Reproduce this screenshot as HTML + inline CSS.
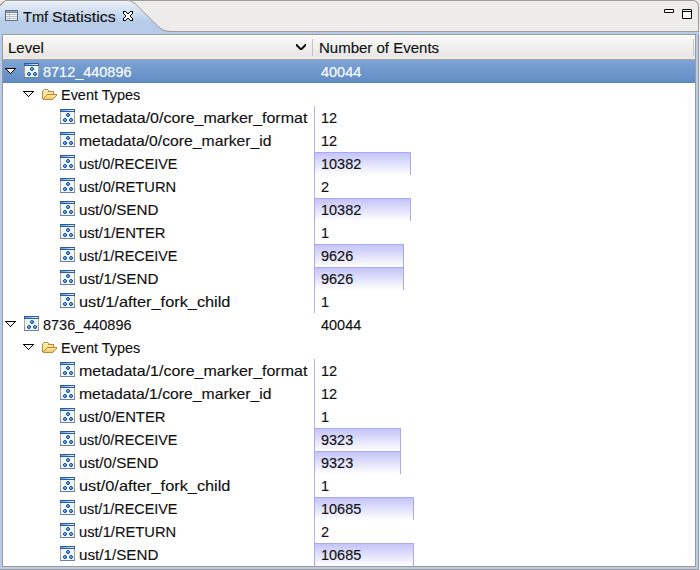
<!DOCTYPE html>
<html><head><meta charset="utf-8">
<style>
*{margin:0;padding:0;box-sizing:border-box}
html,body{width:700px;height:570px;overflow:hidden;background:#eeedeb}
body{position:relative;font-family:"Liberation Sans",sans-serif;font-size:15px;color:#111}
.abs{position:absolute}
.txt{position:absolute;white-space:nowrap;line-height:17px;height:17px;transform-origin:0 0;-webkit-text-stroke:0.15px currentColor}
.row{position:absolute;left:3px;width:692px;height:23px}
.sel{background:linear-gradient(#7ba5da 0px,#7da3d4 1px,#618cc4 22px);border-bottom:1px solid #5685c2}
.bar{position:absolute;height:23px;border:1px solid #a9a9f6;border-bottom:none;background:linear-gradient(#c4c4f8,#ffffff)}
.vl{position:absolute;width:1px;height:23px;background:#b4b4f8}
</style></head><body>

<div class="abs" style="left:0;top:20px;width:699px;height:550px;background:#b6cce9;border-right:1px solid #9f9a95;border-bottom:1px solid #9f9a95"></div>
<div class="abs" style="left:0;top:0;width:699px;height:32px;background:#edecea;border-top-right-radius:6px;border-top:1px solid #9f9a95;border-right:1px solid #9f9a95"></div><div class="abs" style="left:0;top:0;width:6px;height:6px;background:#efeeec"></div>
<svg class="abs" style="left:0;top:0" width="700" height="35">
  <defs>
    <linearGradient id="tg" x1="0" y1="0" x2="0" y2="1">
      <stop offset="0" stop-color="#f4f7fb"/>
      <stop offset="0.06" stop-color="#e9eff8"/>
      <stop offset="0.65" stop-color="#b7cce9"/>
      <stop offset="1" stop-color="#b5cbe8"/>
    </linearGradient>
  </defs>
  <path d="M0,34 L0,5 L5,0 L127,0 C131,0 134.5,2.5 138,6 L157.5,25.5 C161,29 165,31 171,31 L699,31 L699,34 Z" fill="url(#tg)"/>
  <path d="M5.5,0.5 L127,0.5 C131,0.5 134.5,3 138,6.5 L157.5,26 C161,29.5 165,31.5 171,31.5 L699,31.5" fill="none" stroke="#9f9a95" stroke-width="1"/>
  <rect x="0" y="32" width="698" height="2" fill="#b6cce9"/>
</svg>
<div class="abs" style="left:2px;top:34px;width:694px;height:533px;background:#fff;border:1px solid #9f9a95"></div>
<div class="abs" style="left:3px;top:35px;width:692px;height:25px;background:linear-gradient(#ffffff 0px,#f9f9f8 2px,#e7e6e4 22px,#eeedec 24px);border-bottom:1px solid #a8a39e"></div>
<div class="txt" style="left:8px;top:39px">Level</div>
<div class="txt" style="left:319px;top:39px">Number of Events</div>
<div class="abs" style="left:312px;top:39px;width:1px;height:17px;background:#c9c6c2"></div>
<div class="abs" style="left:693px;top:39px;width:1px;height:17px;background:#c9c6c2"></div>
<div class="txt" style="left:23px;top:8px;transform:scaleX(0.97)">Tmf</div><div class="txt" style="left:52px;top:8px;transform:scaleX(1.06)">Statistics</div>
<svg class="abs" style="left:0px;top:0px" width="6" height="6" shape-rendering="crispEdges"><rect x="5" y="0" width="1" height="1" fill="#a29d98"/><rect x="3" y="1" width="2" height="1" fill="#a29d98"/><rect x="5" y="1" width="1" height="1" fill="#f4f7fb"/><rect x="2" y="2" width="2" height="1" fill="#a29d98"/><rect x="4" y="2" width="1" height="1" fill="#f4f7fb"/><rect x="1" y="3" width="2" height="1" fill="#a29d98"/><rect x="3" y="3" width="1" height="1" fill="#f4f7fb"/><rect x="0" y="4" width="2" height="1" fill="#a29d98"/><rect x="2" y="4" width="1" height="1" fill="#f4f7fb"/><rect x="0" y="5" width="1" height="1" fill="#a29d98"/><rect x="1" y="5" width="1" height="1" fill="#f4f7fb"/></svg>
<svg class="abs" style="left:5px;top:10px" width="13" height="11" shape-rendering="crispEdges"><rect x="0" y="0" width="13" height="1" fill="#5d6d8b"/><rect x="0" y="1" width="1" height="1" fill="#5d6d8b"/><rect x="1" y="1" width="11" height="1" fill="#9ca8bd"/><rect x="12" y="1" width="1" height="1" fill="#5d6d8b"/><rect x="0" y="2" width="1" height="1" fill="#5d6d8b"/><rect x="1" y="2" width="11" height="1" fill="#75849f"/><rect x="12" y="2" width="1" height="1" fill="#5d6d8b"/><rect x="0" y="3" width="1" height="1" fill="#5d6d8b"/><rect x="1" y="3" width="3" height="1" fill="#ffffff"/><rect x="4" y="3" width="1" height="1" fill="#b4bccb"/><rect x="5" y="3" width="7" height="1" fill="#ffffff"/><rect x="12" y="3" width="1" height="1" fill="#5d6d8b"/><rect x="0" y="4" width="1" height="1" fill="#5d6d8b"/><rect x="1" y="4" width="11" height="1" fill="#b4bccb"/><rect x="12" y="4" width="1" height="1" fill="#5d6d8b"/><rect x="0" y="5" width="1" height="1" fill="#5d6d8b"/><rect x="1" y="5" width="3" height="1" fill="#ffffff"/><rect x="4" y="5" width="1" height="1" fill="#b4bccb"/><rect x="5" y="5" width="7" height="1" fill="#ffffff"/><rect x="12" y="5" width="1" height="1" fill="#5d6d8b"/><rect x="0" y="6" width="1" height="1" fill="#5d6d8b"/><rect x="1" y="6" width="11" height="1" fill="#b4bccb"/><rect x="12" y="6" width="1" height="1" fill="#5d6d8b"/><rect x="0" y="7" width="1" height="1" fill="#5d6d8b"/><rect x="1" y="7" width="3" height="1" fill="#ffffff"/><rect x="4" y="7" width="1" height="1" fill="#b4bccb"/><rect x="5" y="7" width="7" height="1" fill="#ffffff"/><rect x="12" y="7" width="1" height="1" fill="#5d6d8b"/><rect x="0" y="8" width="1" height="1" fill="#5d6d8b"/><rect x="1" y="8" width="11" height="1" fill="#b4bccb"/><rect x="12" y="8" width="1" height="1" fill="#5d6d8b"/><rect x="0" y="9" width="1" height="1" fill="#5d6d8b"/><rect x="1" y="9" width="3" height="1" fill="#ffffff"/><rect x="4" y="9" width="1" height="1" fill="#b4bccb"/><rect x="5" y="9" width="7" height="1" fill="#ffffff"/><rect x="12" y="9" width="1" height="1" fill="#5d6d8b"/><rect x="0" y="10" width="13" height="1" fill="#5d6d8b"/></svg>
<svg class="abs" style="left:123px;top:11px" width="10" height="10" shape-rendering="crispEdges"><rect x="0" y="0" width="3" height="1" fill="#000000"/><rect x="7" y="0" width="3" height="1" fill="#000000"/><rect x="0" y="1" width="1" height="1" fill="#000000"/><rect x="1" y="1" width="2" height="1" fill="#ffffff"/><rect x="3" y="1" width="1" height="1" fill="#000000"/><rect x="6" y="1" width="1" height="1" fill="#000000"/><rect x="7" y="1" width="2" height="1" fill="#ffffff"/><rect x="9" y="1" width="1" height="1" fill="#000000"/><rect x="0" y="2" width="1" height="1" fill="#000000"/><rect x="1" y="2" width="3" height="1" fill="#ffffff"/><rect x="4" y="2" width="2" height="1" fill="#000000"/><rect x="6" y="2" width="3" height="1" fill="#ffffff"/><rect x="9" y="2" width="1" height="1" fill="#000000"/><rect x="1" y="3" width="1" height="1" fill="#000000"/><rect x="2" y="3" width="6" height="1" fill="#ffffff"/><rect x="8" y="3" width="1" height="1" fill="#000000"/><rect x="2" y="4" width="1" height="1" fill="#000000"/><rect x="3" y="4" width="4" height="1" fill="#ffffff"/><rect x="7" y="4" width="1" height="1" fill="#000000"/><rect x="2" y="5" width="1" height="1" fill="#000000"/><rect x="3" y="5" width="4" height="1" fill="#ffffff"/><rect x="7" y="5" width="1" height="1" fill="#000000"/><rect x="1" y="6" width="1" height="1" fill="#000000"/><rect x="2" y="6" width="6" height="1" fill="#ffffff"/><rect x="8" y="6" width="1" height="1" fill="#000000"/><rect x="0" y="7" width="1" height="1" fill="#000000"/><rect x="1" y="7" width="3" height="1" fill="#ffffff"/><rect x="4" y="7" width="2" height="1" fill="#000000"/><rect x="6" y="7" width="3" height="1" fill="#ffffff"/><rect x="9" y="7" width="1" height="1" fill="#000000"/><rect x="0" y="8" width="1" height="1" fill="#000000"/><rect x="1" y="8" width="2" height="1" fill="#ffffff"/><rect x="3" y="8" width="1" height="1" fill="#000000"/><rect x="6" y="8" width="1" height="1" fill="#000000"/><rect x="7" y="8" width="2" height="1" fill="#ffffff"/><rect x="9" y="8" width="1" height="1" fill="#000000"/><rect x="0" y="9" width="3" height="1" fill="#000000"/><rect x="7" y="9" width="3" height="1" fill="#000000"/></svg>
<svg class="abs" style="left:664px;top:9px" width="10" height="4" shape-rendering="crispEdges"><rect x="0" y="0" width="1" height="1" fill="#5a5958"/><rect x="1" y="0" width="8" height="1" fill="#000000"/><rect x="9" y="0" width="1" height="1" fill="#5a5958"/><rect x="0" y="1" width="1" height="1" fill="#000000"/><rect x="1" y="1" width="8" height="1" fill="#ffffff"/><rect x="9" y="1" width="1" height="1" fill="#000000"/><rect x="0" y="2" width="1" height="1" fill="#000000"/><rect x="1" y="2" width="8" height="1" fill="#ffffff"/><rect x="9" y="2" width="1" height="1" fill="#000000"/><rect x="0" y="3" width="1" height="1" fill="#5a5958"/><rect x="1" y="3" width="8" height="1" fill="#000000"/><rect x="9" y="3" width="1" height="1" fill="#5a5958"/></svg>
<svg class="abs" style="left:682px;top:9px" width="10" height="10" shape-rendering="crispEdges"><rect x="0" y="0" width="1" height="1" fill="#5a5958"/><rect x="1" y="0" width="8" height="1" fill="#000000"/><rect x="9" y="0" width="1" height="1" fill="#5a5958"/><rect x="0" y="1" width="1" height="1" fill="#000000"/><rect x="1" y="1" width="8" height="1" fill="#ffffff"/><rect x="9" y="1" width="1" height="1" fill="#000000"/><rect x="0" y="2" width="10" height="1" fill="#000000"/><rect x="0" y="3" width="1" height="1" fill="#000000"/><rect x="1" y="3" width="8" height="1" fill="#ffffff"/><rect x="9" y="3" width="1" height="1" fill="#000000"/><rect x="0" y="4" width="1" height="1" fill="#000000"/><rect x="1" y="4" width="8" height="1" fill="#ffffff"/><rect x="9" y="4" width="1" height="1" fill="#000000"/><rect x="0" y="5" width="1" height="1" fill="#000000"/><rect x="1" y="5" width="8" height="1" fill="#ffffff"/><rect x="9" y="5" width="1" height="1" fill="#000000"/><rect x="0" y="6" width="1" height="1" fill="#000000"/><rect x="1" y="6" width="8" height="1" fill="#ffffff"/><rect x="9" y="6" width="1" height="1" fill="#000000"/><rect x="0" y="7" width="1" height="1" fill="#000000"/><rect x="1" y="7" width="8" height="1" fill="#ffffff"/><rect x="9" y="7" width="1" height="1" fill="#000000"/><rect x="0" y="8" width="1" height="1" fill="#000000"/><rect x="1" y="8" width="8" height="1" fill="#ffffff"/><rect x="9" y="8" width="1" height="1" fill="#000000"/><rect x="0" y="9" width="1" height="1" fill="#5a5958"/><rect x="1" y="9" width="8" height="1" fill="#000000"/><rect x="9" y="9" width="1" height="1" fill="#5a5958"/></svg>
<svg class="abs" style="left:296px;top:44px" width="10" height="6" shape-rendering="crispEdges"><rect x="0" y="0" width="1" height="1" fill="#111111"/><rect x="1" y="0" width="1" height="1" fill="#8a8988"/><rect x="8" y="0" width="1" height="1" fill="#8a8988"/><rect x="9" y="0" width="1" height="1" fill="#111111"/><rect x="0" y="1" width="2" height="1" fill="#111111"/><rect x="2" y="1" width="1" height="1" fill="#8a8988"/><rect x="7" y="1" width="1" height="1" fill="#8a8988"/><rect x="8" y="1" width="2" height="1" fill="#111111"/><rect x="0" y="2" width="1" height="1" fill="#8a8988"/><rect x="1" y="2" width="2" height="1" fill="#111111"/><rect x="3" y="2" width="1" height="1" fill="#8a8988"/><rect x="6" y="2" width="1" height="1" fill="#8a8988"/><rect x="7" y="2" width="2" height="1" fill="#111111"/><rect x="9" y="2" width="1" height="1" fill="#8a8988"/><rect x="1" y="3" width="1" height="1" fill="#8a8988"/><rect x="2" y="3" width="2" height="1" fill="#111111"/><rect x="4" y="3" width="2" height="1" fill="#8a8988"/><rect x="6" y="3" width="2" height="1" fill="#111111"/><rect x="8" y="3" width="1" height="1" fill="#8a8988"/><rect x="2" y="4" width="1" height="1" fill="#8a8988"/><rect x="3" y="4" width="4" height="1" fill="#111111"/><rect x="7" y="4" width="1" height="1" fill="#8a8988"/><rect x="3" y="5" width="1" height="1" fill="#8a8988"/><rect x="4" y="5" width="2" height="1" fill="#111111"/><rect x="6" y="5" width="1" height="1" fill="#8a8988"/></svg>
<div class="row sel" style="top:60px"></div>
<svg class="abs" style="left:5px;top:68px" width="11" height="6" shape-rendering="crispEdges"><rect x="0" y="0" width="11" height="1" fill="#000000"/><rect x="1" y="1" width="1" height="1" fill="#000000"/><rect x="2" y="1" width="7" height="1" fill="#ffffff"/><rect x="9" y="1" width="1" height="1" fill="#000000"/><rect x="2" y="2" width="1" height="1" fill="#000000"/><rect x="3" y="2" width="5" height="1" fill="#ffffff"/><rect x="8" y="2" width="1" height="1" fill="#000000"/><rect x="3" y="3" width="1" height="1" fill="#000000"/><rect x="4" y="3" width="3" height="1" fill="#ffffff"/><rect x="7" y="3" width="1" height="1" fill="#000000"/><rect x="4" y="4" width="1" height="1" fill="#000000"/><rect x="5" y="4" width="1" height="1" fill="#ffffff"/><rect x="6" y="4" width="1" height="1" fill="#000000"/><rect x="5" y="5" width="1" height="1" fill="#000000"/></svg>
<svg class="abs" style="left:24px;top:63px" width="15" height="15" shape-rendering="crispEdges"><rect x="0" y="0" width="15" height="1" fill="#2e5c9a"/><rect x="0" y="1" width="1" height="1" fill="#2e5c9a"/><rect x="1" y="1" width="4" height="1" fill="#63a6e4"/><rect x="5" y="1" width="3" height="1" fill="#8cc0ee"/><rect x="8" y="1" width="3" height="1" fill="#b9daf5"/><rect x="11" y="1" width="3" height="1" fill="#e4f1fb"/><rect x="14" y="1" width="1" height="1" fill="#2e5c9a"/><rect x="0" y="2" width="15" height="1" fill="#2e5c9a"/><rect x="0" y="3" width="1" height="1" fill="#b8a978"/><rect x="1" y="3" width="13" height="1" fill="#eef6fd"/><rect x="14" y="3" width="1" height="1" fill="#b8a978"/><rect x="0" y="4" width="1" height="1" fill="#b8a978"/><rect x="1" y="4" width="13" height="1" fill="#eef6fd"/><rect x="14" y="4" width="1" height="1" fill="#b8a978"/><rect x="0" y="5" width="1" height="1" fill="#b8a978"/><rect x="1" y="5" width="13" height="1" fill="#eef6fd"/><rect x="14" y="5" width="1" height="1" fill="#b8a978"/><rect x="0" y="6" width="1" height="1" fill="#b8a978"/><rect x="1" y="6" width="13" height="1" fill="#eef6fd"/><rect x="14" y="6" width="1" height="1" fill="#b8a978"/><rect x="0" y="7" width="1" height="1" fill="#b8a978"/><rect x="1" y="7" width="13" height="1" fill="#eef6fd"/><rect x="14" y="7" width="1" height="1" fill="#b8a978"/><rect x="0" y="8" width="1" height="1" fill="#a3a089"/><rect x="1" y="8" width="13" height="1" fill="#eef6fd"/><rect x="14" y="8" width="1" height="1" fill="#a3a089"/><rect x="0" y="9" width="1" height="1" fill="#a3a089"/><rect x="1" y="9" width="13" height="1" fill="#eef6fd"/><rect x="14" y="9" width="1" height="1" fill="#a3a089"/><rect x="0" y="10" width="1" height="1" fill="#a3a089"/><rect x="1" y="10" width="13" height="1" fill="#eef6fd"/><rect x="14" y="10" width="1" height="1" fill="#a3a089"/><rect x="0" y="11" width="1" height="1" fill="#8790a4"/><rect x="1" y="11" width="13" height="1" fill="#eef6fd"/><rect x="14" y="11" width="1" height="1" fill="#8790a4"/><rect x="0" y="12" width="1" height="1" fill="#8790a4"/><rect x="1" y="12" width="13" height="1" fill="#eef6fd"/><rect x="14" y="12" width="1" height="1" fill="#8790a4"/><rect x="0" y="13" width="1" height="1" fill="#8790a4"/><rect x="1" y="13" width="13" height="1" fill="#eef6fd"/><rect x="14" y="13" width="1" height="1" fill="#8790a4"/><rect x="0" y="14" width="15" height="1" fill="#6e81a1"/><g shape-rendering="auto"><circle cx="8" cy="6" r="1.5" fill="#5d9ee0" stroke="#0f3f8a" stroke-width="1"/><circle cx="7.7" cy="5.8" r="0.6" fill="#b8def9"/><circle cx="5" cy="11" r="1.5" fill="#5d9ee0" stroke="#0f3f8a" stroke-width="1"/><circle cx="4.7" cy="10.8" r="0.6" fill="#b8def9"/><circle cx="11" cy="11" r="1.5" fill="#5d9ee0" stroke="#0f3f8a" stroke-width="1"/><circle cx="10.7" cy="10.8" r="0.6" fill="#b8def9"/></g></svg>
<div class="txt" style="left:43px;top:63px;color:#ffffff;transform:scaleX(0.9640)">8712_440896</div>
<div class="txt" style="left:320.5px;top:63px;color:#ffffff;transform:scaleX(0.9650)">40044</div>
<div class="row" style="top:83px"></div>
<svg class="abs" style="left:23px;top:91px" width="11" height="6" shape-rendering="crispEdges"><rect x="0" y="0" width="11" height="1" fill="#000000"/><rect x="1" y="1" width="1" height="1" fill="#000000"/><rect x="2" y="1" width="7" height="1" fill="#ffffff"/><rect x="9" y="1" width="1" height="1" fill="#000000"/><rect x="2" y="2" width="1" height="1" fill="#000000"/><rect x="3" y="2" width="5" height="1" fill="#ffffff"/><rect x="8" y="2" width="1" height="1" fill="#000000"/><rect x="3" y="3" width="1" height="1" fill="#000000"/><rect x="4" y="3" width="3" height="1" fill="#ffffff"/><rect x="7" y="3" width="1" height="1" fill="#000000"/><rect x="4" y="4" width="1" height="1" fill="#000000"/><rect x="5" y="4" width="1" height="1" fill="#ffffff"/><rect x="6" y="4" width="1" height="1" fill="#000000"/><rect x="5" y="5" width="1" height="1" fill="#000000"/></svg>
<svg class="abs" style="left:42px;top:89px" width="15" height="11" shape-rendering="crispEdges"><rect x="2" y="0" width="4" height="1" fill="#c8852c"/><rect x="1" y="1" width="1" height="1" fill="#c8852c"/><rect x="2" y="1" width="4" height="1" fill="#fffbea"/><rect x="6" y="1" width="1" height="1" fill="#c8852c"/><rect x="0" y="2" width="1" height="1" fill="#c8852c"/><rect x="1" y="2" width="5" height="1" fill="#fae6a4"/><rect x="6" y="2" width="6" height="1" fill="#c8852c"/><rect x="0" y="3" width="1" height="1" fill="#c8852c"/><rect x="1" y="3" width="10" height="1" fill="#fae6a4"/><rect x="11" y="3" width="1" height="1" fill="#c8852c"/><rect x="0" y="4" width="1" height="1" fill="#c8852c"/><rect x="1" y="4" width="10" height="1" fill="#fae6a4"/><rect x="11" y="4" width="1" height="1" fill="#c8852c"/><rect x="0" y="5" width="1" height="1" fill="#c8852c"/><rect x="1" y="5" width="4" height="1" fill="#fae6a4"/><rect x="5" y="5" width="10" height="1" fill="#c8852c"/><rect x="0" y="6" width="1" height="1" fill="#c8852c"/><rect x="1" y="6" width="3" height="1" fill="#fae6a4"/><rect x="4" y="6" width="1" height="1" fill="#c8852c"/><rect x="5" y="6" width="9" height="1" fill="#fbe3a0"/><rect x="14" y="6" width="1" height="1" fill="#c8852c"/><rect x="0" y="7" width="1" height="1" fill="#c8852c"/><rect x="1" y="7" width="2" height="1" fill="#fae6a4"/><rect x="3" y="7" width="1" height="1" fill="#c8852c"/><rect x="4" y="7" width="9" height="1" fill="#fbe3a0"/><rect x="13" y="7" width="1" height="1" fill="#c8852c"/><rect x="0" y="8" width="1" height="1" fill="#c8852c"/><rect x="1" y="8" width="1" height="1" fill="#fae6a4"/><rect x="2" y="8" width="1" height="1" fill="#c8852c"/><rect x="3" y="8" width="9" height="1" fill="#f3cd78"/><rect x="12" y="8" width="1" height="1" fill="#c8852c"/><rect x="0" y="9" width="2" height="1" fill="#c8852c"/><rect x="2" y="9" width="9" height="1" fill="#f3cd78"/><rect x="11" y="9" width="1" height="1" fill="#c8852c"/><rect x="1" y="10" width="10" height="1" fill="#c8852c"/></svg>
<div class="txt" style="left:61px;top:86px;transform:scaleX(0.9630)">Event Types</div>
<div class="row" style="top:106px"></div>
<div class="vl" style="left:314px;top:106px"></div>
<svg class="abs" style="left:60px;top:109px" width="15" height="15" shape-rendering="crispEdges"><rect x="0" y="0" width="15" height="1" fill="#2e5c9a"/><rect x="0" y="1" width="1" height="1" fill="#2e5c9a"/><rect x="1" y="1" width="4" height="1" fill="#63a6e4"/><rect x="5" y="1" width="3" height="1" fill="#8cc0ee"/><rect x="8" y="1" width="3" height="1" fill="#b9daf5"/><rect x="11" y="1" width="3" height="1" fill="#e4f1fb"/><rect x="14" y="1" width="1" height="1" fill="#2e5c9a"/><rect x="0" y="2" width="15" height="1" fill="#2e5c9a"/><rect x="0" y="3" width="1" height="1" fill="#b8a978"/><rect x="1" y="3" width="13" height="1" fill="#eef6fd"/><rect x="14" y="3" width="1" height="1" fill="#b8a978"/><rect x="0" y="4" width="1" height="1" fill="#b8a978"/><rect x="1" y="4" width="13" height="1" fill="#eef6fd"/><rect x="14" y="4" width="1" height="1" fill="#b8a978"/><rect x="0" y="5" width="1" height="1" fill="#b8a978"/><rect x="1" y="5" width="13" height="1" fill="#eef6fd"/><rect x="14" y="5" width="1" height="1" fill="#b8a978"/><rect x="0" y="6" width="1" height="1" fill="#b8a978"/><rect x="1" y="6" width="13" height="1" fill="#eef6fd"/><rect x="14" y="6" width="1" height="1" fill="#b8a978"/><rect x="0" y="7" width="1" height="1" fill="#b8a978"/><rect x="1" y="7" width="13" height="1" fill="#eef6fd"/><rect x="14" y="7" width="1" height="1" fill="#b8a978"/><rect x="0" y="8" width="1" height="1" fill="#a3a089"/><rect x="1" y="8" width="13" height="1" fill="#eef6fd"/><rect x="14" y="8" width="1" height="1" fill="#a3a089"/><rect x="0" y="9" width="1" height="1" fill="#a3a089"/><rect x="1" y="9" width="13" height="1" fill="#eef6fd"/><rect x="14" y="9" width="1" height="1" fill="#a3a089"/><rect x="0" y="10" width="1" height="1" fill="#a3a089"/><rect x="1" y="10" width="13" height="1" fill="#eef6fd"/><rect x="14" y="10" width="1" height="1" fill="#a3a089"/><rect x="0" y="11" width="1" height="1" fill="#8790a4"/><rect x="1" y="11" width="13" height="1" fill="#eef6fd"/><rect x="14" y="11" width="1" height="1" fill="#8790a4"/><rect x="0" y="12" width="1" height="1" fill="#8790a4"/><rect x="1" y="12" width="13" height="1" fill="#eef6fd"/><rect x="14" y="12" width="1" height="1" fill="#8790a4"/><rect x="0" y="13" width="1" height="1" fill="#8790a4"/><rect x="1" y="13" width="13" height="1" fill="#eef6fd"/><rect x="14" y="13" width="1" height="1" fill="#8790a4"/><rect x="0" y="14" width="15" height="1" fill="#6e81a1"/><g shape-rendering="auto"><circle cx="8" cy="6" r="1.5" fill="#5d9ee0" stroke="#0f3f8a" stroke-width="1"/><circle cx="7.7" cy="5.8" r="0.6" fill="#b8def9"/><circle cx="5" cy="11" r="1.5" fill="#5d9ee0" stroke="#0f3f8a" stroke-width="1"/><circle cx="4.7" cy="10.8" r="0.6" fill="#b8def9"/><circle cx="11" cy="11" r="1.5" fill="#5d9ee0" stroke="#0f3f8a" stroke-width="1"/><circle cx="10.7" cy="10.8" r="0.6" fill="#b8def9"/></g></svg>
<div class="txt" style="left:79px;top:109px;transform:scaleX(1.0657)">metadata/0/core_marker_format</div>
<div class="txt" style="left:320.5px;top:109px;transform:scaleX(0.9650)">12</div>
<div class="row" style="top:129px"></div>
<div class="vl" style="left:314px;top:129px"></div>
<svg class="abs" style="left:60px;top:132px" width="15" height="15" shape-rendering="crispEdges"><rect x="0" y="0" width="15" height="1" fill="#2e5c9a"/><rect x="0" y="1" width="1" height="1" fill="#2e5c9a"/><rect x="1" y="1" width="4" height="1" fill="#63a6e4"/><rect x="5" y="1" width="3" height="1" fill="#8cc0ee"/><rect x="8" y="1" width="3" height="1" fill="#b9daf5"/><rect x="11" y="1" width="3" height="1" fill="#e4f1fb"/><rect x="14" y="1" width="1" height="1" fill="#2e5c9a"/><rect x="0" y="2" width="15" height="1" fill="#2e5c9a"/><rect x="0" y="3" width="1" height="1" fill="#b8a978"/><rect x="1" y="3" width="13" height="1" fill="#eef6fd"/><rect x="14" y="3" width="1" height="1" fill="#b8a978"/><rect x="0" y="4" width="1" height="1" fill="#b8a978"/><rect x="1" y="4" width="13" height="1" fill="#eef6fd"/><rect x="14" y="4" width="1" height="1" fill="#b8a978"/><rect x="0" y="5" width="1" height="1" fill="#b8a978"/><rect x="1" y="5" width="13" height="1" fill="#eef6fd"/><rect x="14" y="5" width="1" height="1" fill="#b8a978"/><rect x="0" y="6" width="1" height="1" fill="#b8a978"/><rect x="1" y="6" width="13" height="1" fill="#eef6fd"/><rect x="14" y="6" width="1" height="1" fill="#b8a978"/><rect x="0" y="7" width="1" height="1" fill="#b8a978"/><rect x="1" y="7" width="13" height="1" fill="#eef6fd"/><rect x="14" y="7" width="1" height="1" fill="#b8a978"/><rect x="0" y="8" width="1" height="1" fill="#a3a089"/><rect x="1" y="8" width="13" height="1" fill="#eef6fd"/><rect x="14" y="8" width="1" height="1" fill="#a3a089"/><rect x="0" y="9" width="1" height="1" fill="#a3a089"/><rect x="1" y="9" width="13" height="1" fill="#eef6fd"/><rect x="14" y="9" width="1" height="1" fill="#a3a089"/><rect x="0" y="10" width="1" height="1" fill="#a3a089"/><rect x="1" y="10" width="13" height="1" fill="#eef6fd"/><rect x="14" y="10" width="1" height="1" fill="#a3a089"/><rect x="0" y="11" width="1" height="1" fill="#8790a4"/><rect x="1" y="11" width="13" height="1" fill="#eef6fd"/><rect x="14" y="11" width="1" height="1" fill="#8790a4"/><rect x="0" y="12" width="1" height="1" fill="#8790a4"/><rect x="1" y="12" width="13" height="1" fill="#eef6fd"/><rect x="14" y="12" width="1" height="1" fill="#8790a4"/><rect x="0" y="13" width="1" height="1" fill="#8790a4"/><rect x="1" y="13" width="13" height="1" fill="#eef6fd"/><rect x="14" y="13" width="1" height="1" fill="#8790a4"/><rect x="0" y="14" width="15" height="1" fill="#6e81a1"/><g shape-rendering="auto"><circle cx="8" cy="6" r="1.5" fill="#5d9ee0" stroke="#0f3f8a" stroke-width="1"/><circle cx="7.7" cy="5.8" r="0.6" fill="#b8def9"/><circle cx="5" cy="11" r="1.5" fill="#5d9ee0" stroke="#0f3f8a" stroke-width="1"/><circle cx="4.7" cy="10.8" r="0.6" fill="#b8def9"/><circle cx="11" cy="11" r="1.5" fill="#5d9ee0" stroke="#0f3f8a" stroke-width="1"/><circle cx="10.7" cy="10.8" r="0.6" fill="#b8def9"/></g></svg>
<div class="txt" style="left:79px;top:132px;transform:scaleX(1.0500)">metadata/0/core_marker_id</div>
<div class="txt" style="left:320.5px;top:132px;transform:scaleX(0.9650)">12</div>
<div class="row" style="top:152px"></div>
<div class="bar" style="left:314px;top:152px;width:97px"></div>
<svg class="abs" style="left:60px;top:155px" width="15" height="15" shape-rendering="crispEdges"><rect x="0" y="0" width="15" height="1" fill="#2e5c9a"/><rect x="0" y="1" width="1" height="1" fill="#2e5c9a"/><rect x="1" y="1" width="4" height="1" fill="#63a6e4"/><rect x="5" y="1" width="3" height="1" fill="#8cc0ee"/><rect x="8" y="1" width="3" height="1" fill="#b9daf5"/><rect x="11" y="1" width="3" height="1" fill="#e4f1fb"/><rect x="14" y="1" width="1" height="1" fill="#2e5c9a"/><rect x="0" y="2" width="15" height="1" fill="#2e5c9a"/><rect x="0" y="3" width="1" height="1" fill="#b8a978"/><rect x="1" y="3" width="13" height="1" fill="#eef6fd"/><rect x="14" y="3" width="1" height="1" fill="#b8a978"/><rect x="0" y="4" width="1" height="1" fill="#b8a978"/><rect x="1" y="4" width="13" height="1" fill="#eef6fd"/><rect x="14" y="4" width="1" height="1" fill="#b8a978"/><rect x="0" y="5" width="1" height="1" fill="#b8a978"/><rect x="1" y="5" width="13" height="1" fill="#eef6fd"/><rect x="14" y="5" width="1" height="1" fill="#b8a978"/><rect x="0" y="6" width="1" height="1" fill="#b8a978"/><rect x="1" y="6" width="13" height="1" fill="#eef6fd"/><rect x="14" y="6" width="1" height="1" fill="#b8a978"/><rect x="0" y="7" width="1" height="1" fill="#b8a978"/><rect x="1" y="7" width="13" height="1" fill="#eef6fd"/><rect x="14" y="7" width="1" height="1" fill="#b8a978"/><rect x="0" y="8" width="1" height="1" fill="#a3a089"/><rect x="1" y="8" width="13" height="1" fill="#eef6fd"/><rect x="14" y="8" width="1" height="1" fill="#a3a089"/><rect x="0" y="9" width="1" height="1" fill="#a3a089"/><rect x="1" y="9" width="13" height="1" fill="#eef6fd"/><rect x="14" y="9" width="1" height="1" fill="#a3a089"/><rect x="0" y="10" width="1" height="1" fill="#a3a089"/><rect x="1" y="10" width="13" height="1" fill="#eef6fd"/><rect x="14" y="10" width="1" height="1" fill="#a3a089"/><rect x="0" y="11" width="1" height="1" fill="#8790a4"/><rect x="1" y="11" width="13" height="1" fill="#eef6fd"/><rect x="14" y="11" width="1" height="1" fill="#8790a4"/><rect x="0" y="12" width="1" height="1" fill="#8790a4"/><rect x="1" y="12" width="13" height="1" fill="#eef6fd"/><rect x="14" y="12" width="1" height="1" fill="#8790a4"/><rect x="0" y="13" width="1" height="1" fill="#8790a4"/><rect x="1" y="13" width="13" height="1" fill="#eef6fd"/><rect x="14" y="13" width="1" height="1" fill="#8790a4"/><rect x="0" y="14" width="15" height="1" fill="#6e81a1"/><g shape-rendering="auto"><circle cx="8" cy="6" r="1.5" fill="#5d9ee0" stroke="#0f3f8a" stroke-width="1"/><circle cx="7.7" cy="5.8" r="0.6" fill="#b8def9"/><circle cx="5" cy="11" r="1.5" fill="#5d9ee0" stroke="#0f3f8a" stroke-width="1"/><circle cx="4.7" cy="10.8" r="0.6" fill="#b8def9"/><circle cx="11" cy="11" r="1.5" fill="#5d9ee0" stroke="#0f3f8a" stroke-width="1"/><circle cx="10.7" cy="10.8" r="0.6" fill="#b8def9"/></g></svg>
<div class="txt" style="left:79px;top:155px;transform:scaleX(0.9604)">ust/0/RECEIVE</div>
<div class="txt" style="left:320.5px;top:155px;transform:scaleX(0.9650)">10382</div>
<div class="row" style="top:175px"></div>
<div class="vl" style="left:314px;top:175px"></div>
<svg class="abs" style="left:60px;top:178px" width="15" height="15" shape-rendering="crispEdges"><rect x="0" y="0" width="15" height="1" fill="#2e5c9a"/><rect x="0" y="1" width="1" height="1" fill="#2e5c9a"/><rect x="1" y="1" width="4" height="1" fill="#63a6e4"/><rect x="5" y="1" width="3" height="1" fill="#8cc0ee"/><rect x="8" y="1" width="3" height="1" fill="#b9daf5"/><rect x="11" y="1" width="3" height="1" fill="#e4f1fb"/><rect x="14" y="1" width="1" height="1" fill="#2e5c9a"/><rect x="0" y="2" width="15" height="1" fill="#2e5c9a"/><rect x="0" y="3" width="1" height="1" fill="#b8a978"/><rect x="1" y="3" width="13" height="1" fill="#eef6fd"/><rect x="14" y="3" width="1" height="1" fill="#b8a978"/><rect x="0" y="4" width="1" height="1" fill="#b8a978"/><rect x="1" y="4" width="13" height="1" fill="#eef6fd"/><rect x="14" y="4" width="1" height="1" fill="#b8a978"/><rect x="0" y="5" width="1" height="1" fill="#b8a978"/><rect x="1" y="5" width="13" height="1" fill="#eef6fd"/><rect x="14" y="5" width="1" height="1" fill="#b8a978"/><rect x="0" y="6" width="1" height="1" fill="#b8a978"/><rect x="1" y="6" width="13" height="1" fill="#eef6fd"/><rect x="14" y="6" width="1" height="1" fill="#b8a978"/><rect x="0" y="7" width="1" height="1" fill="#b8a978"/><rect x="1" y="7" width="13" height="1" fill="#eef6fd"/><rect x="14" y="7" width="1" height="1" fill="#b8a978"/><rect x="0" y="8" width="1" height="1" fill="#a3a089"/><rect x="1" y="8" width="13" height="1" fill="#eef6fd"/><rect x="14" y="8" width="1" height="1" fill="#a3a089"/><rect x="0" y="9" width="1" height="1" fill="#a3a089"/><rect x="1" y="9" width="13" height="1" fill="#eef6fd"/><rect x="14" y="9" width="1" height="1" fill="#a3a089"/><rect x="0" y="10" width="1" height="1" fill="#a3a089"/><rect x="1" y="10" width="13" height="1" fill="#eef6fd"/><rect x="14" y="10" width="1" height="1" fill="#a3a089"/><rect x="0" y="11" width="1" height="1" fill="#8790a4"/><rect x="1" y="11" width="13" height="1" fill="#eef6fd"/><rect x="14" y="11" width="1" height="1" fill="#8790a4"/><rect x="0" y="12" width="1" height="1" fill="#8790a4"/><rect x="1" y="12" width="13" height="1" fill="#eef6fd"/><rect x="14" y="12" width="1" height="1" fill="#8790a4"/><rect x="0" y="13" width="1" height="1" fill="#8790a4"/><rect x="1" y="13" width="13" height="1" fill="#eef6fd"/><rect x="14" y="13" width="1" height="1" fill="#8790a4"/><rect x="0" y="14" width="15" height="1" fill="#6e81a1"/><g shape-rendering="auto"><circle cx="8" cy="6" r="1.5" fill="#5d9ee0" stroke="#0f3f8a" stroke-width="1"/><circle cx="7.7" cy="5.8" r="0.6" fill="#b8def9"/><circle cx="5" cy="11" r="1.5" fill="#5d9ee0" stroke="#0f3f8a" stroke-width="1"/><circle cx="4.7" cy="10.8" r="0.6" fill="#b8def9"/><circle cx="11" cy="11" r="1.5" fill="#5d9ee0" stroke="#0f3f8a" stroke-width="1"/><circle cx="10.7" cy="10.8" r="0.6" fill="#b8def9"/></g></svg>
<div class="txt" style="left:79px;top:178px;transform:scaleX(0.9794)">ust/0/RETURN</div>
<div class="txt" style="left:320.5px;top:178px;transform:scaleX(0.9650)">2</div>
<div class="row" style="top:198px"></div>
<div class="bar" style="left:314px;top:198px;width:97px"></div>
<svg class="abs" style="left:60px;top:201px" width="15" height="15" shape-rendering="crispEdges"><rect x="0" y="0" width="15" height="1" fill="#2e5c9a"/><rect x="0" y="1" width="1" height="1" fill="#2e5c9a"/><rect x="1" y="1" width="4" height="1" fill="#63a6e4"/><rect x="5" y="1" width="3" height="1" fill="#8cc0ee"/><rect x="8" y="1" width="3" height="1" fill="#b9daf5"/><rect x="11" y="1" width="3" height="1" fill="#e4f1fb"/><rect x="14" y="1" width="1" height="1" fill="#2e5c9a"/><rect x="0" y="2" width="15" height="1" fill="#2e5c9a"/><rect x="0" y="3" width="1" height="1" fill="#b8a978"/><rect x="1" y="3" width="13" height="1" fill="#eef6fd"/><rect x="14" y="3" width="1" height="1" fill="#b8a978"/><rect x="0" y="4" width="1" height="1" fill="#b8a978"/><rect x="1" y="4" width="13" height="1" fill="#eef6fd"/><rect x="14" y="4" width="1" height="1" fill="#b8a978"/><rect x="0" y="5" width="1" height="1" fill="#b8a978"/><rect x="1" y="5" width="13" height="1" fill="#eef6fd"/><rect x="14" y="5" width="1" height="1" fill="#b8a978"/><rect x="0" y="6" width="1" height="1" fill="#b8a978"/><rect x="1" y="6" width="13" height="1" fill="#eef6fd"/><rect x="14" y="6" width="1" height="1" fill="#b8a978"/><rect x="0" y="7" width="1" height="1" fill="#b8a978"/><rect x="1" y="7" width="13" height="1" fill="#eef6fd"/><rect x="14" y="7" width="1" height="1" fill="#b8a978"/><rect x="0" y="8" width="1" height="1" fill="#a3a089"/><rect x="1" y="8" width="13" height="1" fill="#eef6fd"/><rect x="14" y="8" width="1" height="1" fill="#a3a089"/><rect x="0" y="9" width="1" height="1" fill="#a3a089"/><rect x="1" y="9" width="13" height="1" fill="#eef6fd"/><rect x="14" y="9" width="1" height="1" fill="#a3a089"/><rect x="0" y="10" width="1" height="1" fill="#a3a089"/><rect x="1" y="10" width="13" height="1" fill="#eef6fd"/><rect x="14" y="10" width="1" height="1" fill="#a3a089"/><rect x="0" y="11" width="1" height="1" fill="#8790a4"/><rect x="1" y="11" width="13" height="1" fill="#eef6fd"/><rect x="14" y="11" width="1" height="1" fill="#8790a4"/><rect x="0" y="12" width="1" height="1" fill="#8790a4"/><rect x="1" y="12" width="13" height="1" fill="#eef6fd"/><rect x="14" y="12" width="1" height="1" fill="#8790a4"/><rect x="0" y="13" width="1" height="1" fill="#8790a4"/><rect x="1" y="13" width="13" height="1" fill="#eef6fd"/><rect x="14" y="13" width="1" height="1" fill="#8790a4"/><rect x="0" y="14" width="15" height="1" fill="#6e81a1"/><g shape-rendering="auto"><circle cx="8" cy="6" r="1.5" fill="#5d9ee0" stroke="#0f3f8a" stroke-width="1"/><circle cx="7.7" cy="5.8" r="0.6" fill="#b8def9"/><circle cx="5" cy="11" r="1.5" fill="#5d9ee0" stroke="#0f3f8a" stroke-width="1"/><circle cx="4.7" cy="10.8" r="0.6" fill="#b8def9"/><circle cx="11" cy="11" r="1.5" fill="#5d9ee0" stroke="#0f3f8a" stroke-width="1"/><circle cx="10.7" cy="10.8" r="0.6" fill="#b8def9"/></g></svg>
<div class="txt" style="left:79px;top:201px;transform:scaleX(1.0130)">ust/0/SEND</div>
<div class="txt" style="left:320.5px;top:201px;transform:scaleX(0.9650)">10382</div>
<div class="row" style="top:221px"></div>
<div class="vl" style="left:314px;top:221px"></div>
<svg class="abs" style="left:60px;top:224px" width="15" height="15" shape-rendering="crispEdges"><rect x="0" y="0" width="15" height="1" fill="#2e5c9a"/><rect x="0" y="1" width="1" height="1" fill="#2e5c9a"/><rect x="1" y="1" width="4" height="1" fill="#63a6e4"/><rect x="5" y="1" width="3" height="1" fill="#8cc0ee"/><rect x="8" y="1" width="3" height="1" fill="#b9daf5"/><rect x="11" y="1" width="3" height="1" fill="#e4f1fb"/><rect x="14" y="1" width="1" height="1" fill="#2e5c9a"/><rect x="0" y="2" width="15" height="1" fill="#2e5c9a"/><rect x="0" y="3" width="1" height="1" fill="#b8a978"/><rect x="1" y="3" width="13" height="1" fill="#eef6fd"/><rect x="14" y="3" width="1" height="1" fill="#b8a978"/><rect x="0" y="4" width="1" height="1" fill="#b8a978"/><rect x="1" y="4" width="13" height="1" fill="#eef6fd"/><rect x="14" y="4" width="1" height="1" fill="#b8a978"/><rect x="0" y="5" width="1" height="1" fill="#b8a978"/><rect x="1" y="5" width="13" height="1" fill="#eef6fd"/><rect x="14" y="5" width="1" height="1" fill="#b8a978"/><rect x="0" y="6" width="1" height="1" fill="#b8a978"/><rect x="1" y="6" width="13" height="1" fill="#eef6fd"/><rect x="14" y="6" width="1" height="1" fill="#b8a978"/><rect x="0" y="7" width="1" height="1" fill="#b8a978"/><rect x="1" y="7" width="13" height="1" fill="#eef6fd"/><rect x="14" y="7" width="1" height="1" fill="#b8a978"/><rect x="0" y="8" width="1" height="1" fill="#a3a089"/><rect x="1" y="8" width="13" height="1" fill="#eef6fd"/><rect x="14" y="8" width="1" height="1" fill="#a3a089"/><rect x="0" y="9" width="1" height="1" fill="#a3a089"/><rect x="1" y="9" width="13" height="1" fill="#eef6fd"/><rect x="14" y="9" width="1" height="1" fill="#a3a089"/><rect x="0" y="10" width="1" height="1" fill="#a3a089"/><rect x="1" y="10" width="13" height="1" fill="#eef6fd"/><rect x="14" y="10" width="1" height="1" fill="#a3a089"/><rect x="0" y="11" width="1" height="1" fill="#8790a4"/><rect x="1" y="11" width="13" height="1" fill="#eef6fd"/><rect x="14" y="11" width="1" height="1" fill="#8790a4"/><rect x="0" y="12" width="1" height="1" fill="#8790a4"/><rect x="1" y="12" width="13" height="1" fill="#eef6fd"/><rect x="14" y="12" width="1" height="1" fill="#8790a4"/><rect x="0" y="13" width="1" height="1" fill="#8790a4"/><rect x="1" y="13" width="13" height="1" fill="#eef6fd"/><rect x="14" y="13" width="1" height="1" fill="#8790a4"/><rect x="0" y="14" width="15" height="1" fill="#6e81a1"/><g shape-rendering="auto"><circle cx="8" cy="6" r="1.5" fill="#5d9ee0" stroke="#0f3f8a" stroke-width="1"/><circle cx="7.7" cy="5.8" r="0.6" fill="#b8def9"/><circle cx="5" cy="11" r="1.5" fill="#5d9ee0" stroke="#0f3f8a" stroke-width="1"/><circle cx="4.7" cy="10.8" r="0.6" fill="#b8def9"/><circle cx="11" cy="11" r="1.5" fill="#5d9ee0" stroke="#0f3f8a" stroke-width="1"/><circle cx="10.7" cy="10.8" r="0.6" fill="#b8def9"/></g></svg>
<div class="txt" style="left:79px;top:224px;transform:scaleX(0.9884)">ust/1/ENTER</div>
<div class="txt" style="left:320.5px;top:224px;transform:scaleX(0.9650)">1</div>
<div class="row" style="top:244px"></div>
<div class="bar" style="left:314px;top:244px;width:90px"></div>
<svg class="abs" style="left:60px;top:247px" width="15" height="15" shape-rendering="crispEdges"><rect x="0" y="0" width="15" height="1" fill="#2e5c9a"/><rect x="0" y="1" width="1" height="1" fill="#2e5c9a"/><rect x="1" y="1" width="4" height="1" fill="#63a6e4"/><rect x="5" y="1" width="3" height="1" fill="#8cc0ee"/><rect x="8" y="1" width="3" height="1" fill="#b9daf5"/><rect x="11" y="1" width="3" height="1" fill="#e4f1fb"/><rect x="14" y="1" width="1" height="1" fill="#2e5c9a"/><rect x="0" y="2" width="15" height="1" fill="#2e5c9a"/><rect x="0" y="3" width="1" height="1" fill="#b8a978"/><rect x="1" y="3" width="13" height="1" fill="#eef6fd"/><rect x="14" y="3" width="1" height="1" fill="#b8a978"/><rect x="0" y="4" width="1" height="1" fill="#b8a978"/><rect x="1" y="4" width="13" height="1" fill="#eef6fd"/><rect x="14" y="4" width="1" height="1" fill="#b8a978"/><rect x="0" y="5" width="1" height="1" fill="#b8a978"/><rect x="1" y="5" width="13" height="1" fill="#eef6fd"/><rect x="14" y="5" width="1" height="1" fill="#b8a978"/><rect x="0" y="6" width="1" height="1" fill="#b8a978"/><rect x="1" y="6" width="13" height="1" fill="#eef6fd"/><rect x="14" y="6" width="1" height="1" fill="#b8a978"/><rect x="0" y="7" width="1" height="1" fill="#b8a978"/><rect x="1" y="7" width="13" height="1" fill="#eef6fd"/><rect x="14" y="7" width="1" height="1" fill="#b8a978"/><rect x="0" y="8" width="1" height="1" fill="#a3a089"/><rect x="1" y="8" width="13" height="1" fill="#eef6fd"/><rect x="14" y="8" width="1" height="1" fill="#a3a089"/><rect x="0" y="9" width="1" height="1" fill="#a3a089"/><rect x="1" y="9" width="13" height="1" fill="#eef6fd"/><rect x="14" y="9" width="1" height="1" fill="#a3a089"/><rect x="0" y="10" width="1" height="1" fill="#a3a089"/><rect x="1" y="10" width="13" height="1" fill="#eef6fd"/><rect x="14" y="10" width="1" height="1" fill="#a3a089"/><rect x="0" y="11" width="1" height="1" fill="#8790a4"/><rect x="1" y="11" width="13" height="1" fill="#eef6fd"/><rect x="14" y="11" width="1" height="1" fill="#8790a4"/><rect x="0" y="12" width="1" height="1" fill="#8790a4"/><rect x="1" y="12" width="13" height="1" fill="#eef6fd"/><rect x="14" y="12" width="1" height="1" fill="#8790a4"/><rect x="0" y="13" width="1" height="1" fill="#8790a4"/><rect x="1" y="13" width="13" height="1" fill="#eef6fd"/><rect x="14" y="13" width="1" height="1" fill="#8790a4"/><rect x="0" y="14" width="15" height="1" fill="#6e81a1"/><g shape-rendering="auto"><circle cx="8" cy="6" r="1.5" fill="#5d9ee0" stroke="#0f3f8a" stroke-width="1"/><circle cx="7.7" cy="5.8" r="0.6" fill="#b8def9"/><circle cx="5" cy="11" r="1.5" fill="#5d9ee0" stroke="#0f3f8a" stroke-width="1"/><circle cx="4.7" cy="10.8" r="0.6" fill="#b8def9"/><circle cx="11" cy="11" r="1.5" fill="#5d9ee0" stroke="#0f3f8a" stroke-width="1"/><circle cx="10.7" cy="10.8" r="0.6" fill="#b8def9"/></g></svg>
<div class="txt" style="left:79px;top:247px;transform:scaleX(0.9604)">ust/1/RECEIVE</div>
<div class="txt" style="left:320.5px;top:247px;transform:scaleX(0.9650)">9626</div>
<div class="row" style="top:267px"></div>
<div class="bar" style="left:314px;top:267px;width:90px"></div>
<svg class="abs" style="left:60px;top:270px" width="15" height="15" shape-rendering="crispEdges"><rect x="0" y="0" width="15" height="1" fill="#2e5c9a"/><rect x="0" y="1" width="1" height="1" fill="#2e5c9a"/><rect x="1" y="1" width="4" height="1" fill="#63a6e4"/><rect x="5" y="1" width="3" height="1" fill="#8cc0ee"/><rect x="8" y="1" width="3" height="1" fill="#b9daf5"/><rect x="11" y="1" width="3" height="1" fill="#e4f1fb"/><rect x="14" y="1" width="1" height="1" fill="#2e5c9a"/><rect x="0" y="2" width="15" height="1" fill="#2e5c9a"/><rect x="0" y="3" width="1" height="1" fill="#b8a978"/><rect x="1" y="3" width="13" height="1" fill="#eef6fd"/><rect x="14" y="3" width="1" height="1" fill="#b8a978"/><rect x="0" y="4" width="1" height="1" fill="#b8a978"/><rect x="1" y="4" width="13" height="1" fill="#eef6fd"/><rect x="14" y="4" width="1" height="1" fill="#b8a978"/><rect x="0" y="5" width="1" height="1" fill="#b8a978"/><rect x="1" y="5" width="13" height="1" fill="#eef6fd"/><rect x="14" y="5" width="1" height="1" fill="#b8a978"/><rect x="0" y="6" width="1" height="1" fill="#b8a978"/><rect x="1" y="6" width="13" height="1" fill="#eef6fd"/><rect x="14" y="6" width="1" height="1" fill="#b8a978"/><rect x="0" y="7" width="1" height="1" fill="#b8a978"/><rect x="1" y="7" width="13" height="1" fill="#eef6fd"/><rect x="14" y="7" width="1" height="1" fill="#b8a978"/><rect x="0" y="8" width="1" height="1" fill="#a3a089"/><rect x="1" y="8" width="13" height="1" fill="#eef6fd"/><rect x="14" y="8" width="1" height="1" fill="#a3a089"/><rect x="0" y="9" width="1" height="1" fill="#a3a089"/><rect x="1" y="9" width="13" height="1" fill="#eef6fd"/><rect x="14" y="9" width="1" height="1" fill="#a3a089"/><rect x="0" y="10" width="1" height="1" fill="#a3a089"/><rect x="1" y="10" width="13" height="1" fill="#eef6fd"/><rect x="14" y="10" width="1" height="1" fill="#a3a089"/><rect x="0" y="11" width="1" height="1" fill="#8790a4"/><rect x="1" y="11" width="13" height="1" fill="#eef6fd"/><rect x="14" y="11" width="1" height="1" fill="#8790a4"/><rect x="0" y="12" width="1" height="1" fill="#8790a4"/><rect x="1" y="12" width="13" height="1" fill="#eef6fd"/><rect x="14" y="12" width="1" height="1" fill="#8790a4"/><rect x="0" y="13" width="1" height="1" fill="#8790a4"/><rect x="1" y="13" width="13" height="1" fill="#eef6fd"/><rect x="14" y="13" width="1" height="1" fill="#8790a4"/><rect x="0" y="14" width="15" height="1" fill="#6e81a1"/><g shape-rendering="auto"><circle cx="8" cy="6" r="1.5" fill="#5d9ee0" stroke="#0f3f8a" stroke-width="1"/><circle cx="7.7" cy="5.8" r="0.6" fill="#b8def9"/><circle cx="5" cy="11" r="1.5" fill="#5d9ee0" stroke="#0f3f8a" stroke-width="1"/><circle cx="4.7" cy="10.8" r="0.6" fill="#b8def9"/><circle cx="11" cy="11" r="1.5" fill="#5d9ee0" stroke="#0f3f8a" stroke-width="1"/><circle cx="10.7" cy="10.8" r="0.6" fill="#b8def9"/></g></svg>
<div class="txt" style="left:79px;top:270px;transform:scaleX(1.0130)">ust/1/SEND</div>
<div class="txt" style="left:320.5px;top:270px;transform:scaleX(0.9650)">9626</div>
<div class="row" style="top:290px"></div>
<div class="vl" style="left:314px;top:290px"></div>
<svg class="abs" style="left:60px;top:293px" width="15" height="15" shape-rendering="crispEdges"><rect x="0" y="0" width="15" height="1" fill="#2e5c9a"/><rect x="0" y="1" width="1" height="1" fill="#2e5c9a"/><rect x="1" y="1" width="4" height="1" fill="#63a6e4"/><rect x="5" y="1" width="3" height="1" fill="#8cc0ee"/><rect x="8" y="1" width="3" height="1" fill="#b9daf5"/><rect x="11" y="1" width="3" height="1" fill="#e4f1fb"/><rect x="14" y="1" width="1" height="1" fill="#2e5c9a"/><rect x="0" y="2" width="15" height="1" fill="#2e5c9a"/><rect x="0" y="3" width="1" height="1" fill="#b8a978"/><rect x="1" y="3" width="13" height="1" fill="#eef6fd"/><rect x="14" y="3" width="1" height="1" fill="#b8a978"/><rect x="0" y="4" width="1" height="1" fill="#b8a978"/><rect x="1" y="4" width="13" height="1" fill="#eef6fd"/><rect x="14" y="4" width="1" height="1" fill="#b8a978"/><rect x="0" y="5" width="1" height="1" fill="#b8a978"/><rect x="1" y="5" width="13" height="1" fill="#eef6fd"/><rect x="14" y="5" width="1" height="1" fill="#b8a978"/><rect x="0" y="6" width="1" height="1" fill="#b8a978"/><rect x="1" y="6" width="13" height="1" fill="#eef6fd"/><rect x="14" y="6" width="1" height="1" fill="#b8a978"/><rect x="0" y="7" width="1" height="1" fill="#b8a978"/><rect x="1" y="7" width="13" height="1" fill="#eef6fd"/><rect x="14" y="7" width="1" height="1" fill="#b8a978"/><rect x="0" y="8" width="1" height="1" fill="#a3a089"/><rect x="1" y="8" width="13" height="1" fill="#eef6fd"/><rect x="14" y="8" width="1" height="1" fill="#a3a089"/><rect x="0" y="9" width="1" height="1" fill="#a3a089"/><rect x="1" y="9" width="13" height="1" fill="#eef6fd"/><rect x="14" y="9" width="1" height="1" fill="#a3a089"/><rect x="0" y="10" width="1" height="1" fill="#a3a089"/><rect x="1" y="10" width="13" height="1" fill="#eef6fd"/><rect x="14" y="10" width="1" height="1" fill="#a3a089"/><rect x="0" y="11" width="1" height="1" fill="#8790a4"/><rect x="1" y="11" width="13" height="1" fill="#eef6fd"/><rect x="14" y="11" width="1" height="1" fill="#8790a4"/><rect x="0" y="12" width="1" height="1" fill="#8790a4"/><rect x="1" y="12" width="13" height="1" fill="#eef6fd"/><rect x="14" y="12" width="1" height="1" fill="#8790a4"/><rect x="0" y="13" width="1" height="1" fill="#8790a4"/><rect x="1" y="13" width="13" height="1" fill="#eef6fd"/><rect x="14" y="13" width="1" height="1" fill="#8790a4"/><rect x="0" y="14" width="15" height="1" fill="#6e81a1"/><g shape-rendering="auto"><circle cx="8" cy="6" r="1.5" fill="#5d9ee0" stroke="#0f3f8a" stroke-width="1"/><circle cx="7.7" cy="5.8" r="0.6" fill="#b8def9"/><circle cx="5" cy="11" r="1.5" fill="#5d9ee0" stroke="#0f3f8a" stroke-width="1"/><circle cx="4.7" cy="10.8" r="0.6" fill="#b8def9"/><circle cx="11" cy="11" r="1.5" fill="#5d9ee0" stroke="#0f3f8a" stroke-width="1"/><circle cx="10.7" cy="10.8" r="0.6" fill="#b8def9"/></g></svg>
<div class="txt" style="left:79px;top:293px;transform:scaleX(1.0876)">ust/1/after_fork_child</div>
<div class="txt" style="left:320.5px;top:293px;transform:scaleX(0.9650)">1</div>
<div class="row" style="top:313px"></div>
<svg class="abs" style="left:5px;top:321px" width="11" height="6" shape-rendering="crispEdges"><rect x="0" y="0" width="11" height="1" fill="#000000"/><rect x="1" y="1" width="1" height="1" fill="#000000"/><rect x="2" y="1" width="7" height="1" fill="#ffffff"/><rect x="9" y="1" width="1" height="1" fill="#000000"/><rect x="2" y="2" width="1" height="1" fill="#000000"/><rect x="3" y="2" width="5" height="1" fill="#ffffff"/><rect x="8" y="2" width="1" height="1" fill="#000000"/><rect x="3" y="3" width="1" height="1" fill="#000000"/><rect x="4" y="3" width="3" height="1" fill="#ffffff"/><rect x="7" y="3" width="1" height="1" fill="#000000"/><rect x="4" y="4" width="1" height="1" fill="#000000"/><rect x="5" y="4" width="1" height="1" fill="#ffffff"/><rect x="6" y="4" width="1" height="1" fill="#000000"/><rect x="5" y="5" width="1" height="1" fill="#000000"/></svg>
<svg class="abs" style="left:24px;top:316px" width="15" height="15" shape-rendering="crispEdges"><rect x="0" y="0" width="15" height="1" fill="#2e5c9a"/><rect x="0" y="1" width="1" height="1" fill="#2e5c9a"/><rect x="1" y="1" width="4" height="1" fill="#63a6e4"/><rect x="5" y="1" width="3" height="1" fill="#8cc0ee"/><rect x="8" y="1" width="3" height="1" fill="#b9daf5"/><rect x="11" y="1" width="3" height="1" fill="#e4f1fb"/><rect x="14" y="1" width="1" height="1" fill="#2e5c9a"/><rect x="0" y="2" width="15" height="1" fill="#2e5c9a"/><rect x="0" y="3" width="1" height="1" fill="#b8a978"/><rect x="1" y="3" width="13" height="1" fill="#eef6fd"/><rect x="14" y="3" width="1" height="1" fill="#b8a978"/><rect x="0" y="4" width="1" height="1" fill="#b8a978"/><rect x="1" y="4" width="13" height="1" fill="#eef6fd"/><rect x="14" y="4" width="1" height="1" fill="#b8a978"/><rect x="0" y="5" width="1" height="1" fill="#b8a978"/><rect x="1" y="5" width="13" height="1" fill="#eef6fd"/><rect x="14" y="5" width="1" height="1" fill="#b8a978"/><rect x="0" y="6" width="1" height="1" fill="#b8a978"/><rect x="1" y="6" width="13" height="1" fill="#eef6fd"/><rect x="14" y="6" width="1" height="1" fill="#b8a978"/><rect x="0" y="7" width="1" height="1" fill="#b8a978"/><rect x="1" y="7" width="13" height="1" fill="#eef6fd"/><rect x="14" y="7" width="1" height="1" fill="#b8a978"/><rect x="0" y="8" width="1" height="1" fill="#a3a089"/><rect x="1" y="8" width="13" height="1" fill="#eef6fd"/><rect x="14" y="8" width="1" height="1" fill="#a3a089"/><rect x="0" y="9" width="1" height="1" fill="#a3a089"/><rect x="1" y="9" width="13" height="1" fill="#eef6fd"/><rect x="14" y="9" width="1" height="1" fill="#a3a089"/><rect x="0" y="10" width="1" height="1" fill="#a3a089"/><rect x="1" y="10" width="13" height="1" fill="#eef6fd"/><rect x="14" y="10" width="1" height="1" fill="#a3a089"/><rect x="0" y="11" width="1" height="1" fill="#8790a4"/><rect x="1" y="11" width="13" height="1" fill="#eef6fd"/><rect x="14" y="11" width="1" height="1" fill="#8790a4"/><rect x="0" y="12" width="1" height="1" fill="#8790a4"/><rect x="1" y="12" width="13" height="1" fill="#eef6fd"/><rect x="14" y="12" width="1" height="1" fill="#8790a4"/><rect x="0" y="13" width="1" height="1" fill="#8790a4"/><rect x="1" y="13" width="13" height="1" fill="#eef6fd"/><rect x="14" y="13" width="1" height="1" fill="#8790a4"/><rect x="0" y="14" width="15" height="1" fill="#6e81a1"/><g shape-rendering="auto"><circle cx="8" cy="6" r="1.5" fill="#5d9ee0" stroke="#0f3f8a" stroke-width="1"/><circle cx="7.7" cy="5.8" r="0.6" fill="#b8def9"/><circle cx="5" cy="11" r="1.5" fill="#5d9ee0" stroke="#0f3f8a" stroke-width="1"/><circle cx="4.7" cy="10.8" r="0.6" fill="#b8def9"/><circle cx="11" cy="11" r="1.5" fill="#5d9ee0" stroke="#0f3f8a" stroke-width="1"/><circle cx="10.7" cy="10.8" r="0.6" fill="#b8def9"/></g></svg>
<div class="txt" style="left:43px;top:316px;transform:scaleX(0.9640)">8736_440896</div>
<div class="txt" style="left:320.5px;top:316px;transform:scaleX(0.9650)">40044</div>
<div class="row" style="top:336px"></div>
<svg class="abs" style="left:23px;top:344px" width="11" height="6" shape-rendering="crispEdges"><rect x="0" y="0" width="11" height="1" fill="#000000"/><rect x="1" y="1" width="1" height="1" fill="#000000"/><rect x="2" y="1" width="7" height="1" fill="#ffffff"/><rect x="9" y="1" width="1" height="1" fill="#000000"/><rect x="2" y="2" width="1" height="1" fill="#000000"/><rect x="3" y="2" width="5" height="1" fill="#ffffff"/><rect x="8" y="2" width="1" height="1" fill="#000000"/><rect x="3" y="3" width="1" height="1" fill="#000000"/><rect x="4" y="3" width="3" height="1" fill="#ffffff"/><rect x="7" y="3" width="1" height="1" fill="#000000"/><rect x="4" y="4" width="1" height="1" fill="#000000"/><rect x="5" y="4" width="1" height="1" fill="#ffffff"/><rect x="6" y="4" width="1" height="1" fill="#000000"/><rect x="5" y="5" width="1" height="1" fill="#000000"/></svg>
<svg class="abs" style="left:42px;top:342px" width="15" height="11" shape-rendering="crispEdges"><rect x="2" y="0" width="4" height="1" fill="#c8852c"/><rect x="1" y="1" width="1" height="1" fill="#c8852c"/><rect x="2" y="1" width="4" height="1" fill="#fffbea"/><rect x="6" y="1" width="1" height="1" fill="#c8852c"/><rect x="0" y="2" width="1" height="1" fill="#c8852c"/><rect x="1" y="2" width="5" height="1" fill="#fae6a4"/><rect x="6" y="2" width="6" height="1" fill="#c8852c"/><rect x="0" y="3" width="1" height="1" fill="#c8852c"/><rect x="1" y="3" width="10" height="1" fill="#fae6a4"/><rect x="11" y="3" width="1" height="1" fill="#c8852c"/><rect x="0" y="4" width="1" height="1" fill="#c8852c"/><rect x="1" y="4" width="10" height="1" fill="#fae6a4"/><rect x="11" y="4" width="1" height="1" fill="#c8852c"/><rect x="0" y="5" width="1" height="1" fill="#c8852c"/><rect x="1" y="5" width="4" height="1" fill="#fae6a4"/><rect x="5" y="5" width="10" height="1" fill="#c8852c"/><rect x="0" y="6" width="1" height="1" fill="#c8852c"/><rect x="1" y="6" width="3" height="1" fill="#fae6a4"/><rect x="4" y="6" width="1" height="1" fill="#c8852c"/><rect x="5" y="6" width="9" height="1" fill="#fbe3a0"/><rect x="14" y="6" width="1" height="1" fill="#c8852c"/><rect x="0" y="7" width="1" height="1" fill="#c8852c"/><rect x="1" y="7" width="2" height="1" fill="#fae6a4"/><rect x="3" y="7" width="1" height="1" fill="#c8852c"/><rect x="4" y="7" width="9" height="1" fill="#fbe3a0"/><rect x="13" y="7" width="1" height="1" fill="#c8852c"/><rect x="0" y="8" width="1" height="1" fill="#c8852c"/><rect x="1" y="8" width="1" height="1" fill="#fae6a4"/><rect x="2" y="8" width="1" height="1" fill="#c8852c"/><rect x="3" y="8" width="9" height="1" fill="#f3cd78"/><rect x="12" y="8" width="1" height="1" fill="#c8852c"/><rect x="0" y="9" width="2" height="1" fill="#c8852c"/><rect x="2" y="9" width="9" height="1" fill="#f3cd78"/><rect x="11" y="9" width="1" height="1" fill="#c8852c"/><rect x="1" y="10" width="10" height="1" fill="#c8852c"/></svg>
<div class="txt" style="left:61px;top:339px;transform:scaleX(0.9630)">Event Types</div>
<div class="row" style="top:359px"></div>
<div class="vl" style="left:314px;top:359px"></div>
<svg class="abs" style="left:60px;top:362px" width="15" height="15" shape-rendering="crispEdges"><rect x="0" y="0" width="15" height="1" fill="#2e5c9a"/><rect x="0" y="1" width="1" height="1" fill="#2e5c9a"/><rect x="1" y="1" width="4" height="1" fill="#63a6e4"/><rect x="5" y="1" width="3" height="1" fill="#8cc0ee"/><rect x="8" y="1" width="3" height="1" fill="#b9daf5"/><rect x="11" y="1" width="3" height="1" fill="#e4f1fb"/><rect x="14" y="1" width="1" height="1" fill="#2e5c9a"/><rect x="0" y="2" width="15" height="1" fill="#2e5c9a"/><rect x="0" y="3" width="1" height="1" fill="#b8a978"/><rect x="1" y="3" width="13" height="1" fill="#eef6fd"/><rect x="14" y="3" width="1" height="1" fill="#b8a978"/><rect x="0" y="4" width="1" height="1" fill="#b8a978"/><rect x="1" y="4" width="13" height="1" fill="#eef6fd"/><rect x="14" y="4" width="1" height="1" fill="#b8a978"/><rect x="0" y="5" width="1" height="1" fill="#b8a978"/><rect x="1" y="5" width="13" height="1" fill="#eef6fd"/><rect x="14" y="5" width="1" height="1" fill="#b8a978"/><rect x="0" y="6" width="1" height="1" fill="#b8a978"/><rect x="1" y="6" width="13" height="1" fill="#eef6fd"/><rect x="14" y="6" width="1" height="1" fill="#b8a978"/><rect x="0" y="7" width="1" height="1" fill="#b8a978"/><rect x="1" y="7" width="13" height="1" fill="#eef6fd"/><rect x="14" y="7" width="1" height="1" fill="#b8a978"/><rect x="0" y="8" width="1" height="1" fill="#a3a089"/><rect x="1" y="8" width="13" height="1" fill="#eef6fd"/><rect x="14" y="8" width="1" height="1" fill="#a3a089"/><rect x="0" y="9" width="1" height="1" fill="#a3a089"/><rect x="1" y="9" width="13" height="1" fill="#eef6fd"/><rect x="14" y="9" width="1" height="1" fill="#a3a089"/><rect x="0" y="10" width="1" height="1" fill="#a3a089"/><rect x="1" y="10" width="13" height="1" fill="#eef6fd"/><rect x="14" y="10" width="1" height="1" fill="#a3a089"/><rect x="0" y="11" width="1" height="1" fill="#8790a4"/><rect x="1" y="11" width="13" height="1" fill="#eef6fd"/><rect x="14" y="11" width="1" height="1" fill="#8790a4"/><rect x="0" y="12" width="1" height="1" fill="#8790a4"/><rect x="1" y="12" width="13" height="1" fill="#eef6fd"/><rect x="14" y="12" width="1" height="1" fill="#8790a4"/><rect x="0" y="13" width="1" height="1" fill="#8790a4"/><rect x="1" y="13" width="13" height="1" fill="#eef6fd"/><rect x="14" y="13" width="1" height="1" fill="#8790a4"/><rect x="0" y="14" width="15" height="1" fill="#6e81a1"/><g shape-rendering="auto"><circle cx="8" cy="6" r="1.5" fill="#5d9ee0" stroke="#0f3f8a" stroke-width="1"/><circle cx="7.7" cy="5.8" r="0.6" fill="#b8def9"/><circle cx="5" cy="11" r="1.5" fill="#5d9ee0" stroke="#0f3f8a" stroke-width="1"/><circle cx="4.7" cy="10.8" r="0.6" fill="#b8def9"/><circle cx="11" cy="11" r="1.5" fill="#5d9ee0" stroke="#0f3f8a" stroke-width="1"/><circle cx="10.7" cy="10.8" r="0.6" fill="#b8def9"/></g></svg>
<div class="txt" style="left:79px;top:362px;transform:scaleX(1.0657)">metadata/1/core_marker_format</div>
<div class="txt" style="left:320.5px;top:362px;transform:scaleX(0.9650)">12</div>
<div class="row" style="top:382px"></div>
<div class="vl" style="left:314px;top:382px"></div>
<svg class="abs" style="left:60px;top:385px" width="15" height="15" shape-rendering="crispEdges"><rect x="0" y="0" width="15" height="1" fill="#2e5c9a"/><rect x="0" y="1" width="1" height="1" fill="#2e5c9a"/><rect x="1" y="1" width="4" height="1" fill="#63a6e4"/><rect x="5" y="1" width="3" height="1" fill="#8cc0ee"/><rect x="8" y="1" width="3" height="1" fill="#b9daf5"/><rect x="11" y="1" width="3" height="1" fill="#e4f1fb"/><rect x="14" y="1" width="1" height="1" fill="#2e5c9a"/><rect x="0" y="2" width="15" height="1" fill="#2e5c9a"/><rect x="0" y="3" width="1" height="1" fill="#b8a978"/><rect x="1" y="3" width="13" height="1" fill="#eef6fd"/><rect x="14" y="3" width="1" height="1" fill="#b8a978"/><rect x="0" y="4" width="1" height="1" fill="#b8a978"/><rect x="1" y="4" width="13" height="1" fill="#eef6fd"/><rect x="14" y="4" width="1" height="1" fill="#b8a978"/><rect x="0" y="5" width="1" height="1" fill="#b8a978"/><rect x="1" y="5" width="13" height="1" fill="#eef6fd"/><rect x="14" y="5" width="1" height="1" fill="#b8a978"/><rect x="0" y="6" width="1" height="1" fill="#b8a978"/><rect x="1" y="6" width="13" height="1" fill="#eef6fd"/><rect x="14" y="6" width="1" height="1" fill="#b8a978"/><rect x="0" y="7" width="1" height="1" fill="#b8a978"/><rect x="1" y="7" width="13" height="1" fill="#eef6fd"/><rect x="14" y="7" width="1" height="1" fill="#b8a978"/><rect x="0" y="8" width="1" height="1" fill="#a3a089"/><rect x="1" y="8" width="13" height="1" fill="#eef6fd"/><rect x="14" y="8" width="1" height="1" fill="#a3a089"/><rect x="0" y="9" width="1" height="1" fill="#a3a089"/><rect x="1" y="9" width="13" height="1" fill="#eef6fd"/><rect x="14" y="9" width="1" height="1" fill="#a3a089"/><rect x="0" y="10" width="1" height="1" fill="#a3a089"/><rect x="1" y="10" width="13" height="1" fill="#eef6fd"/><rect x="14" y="10" width="1" height="1" fill="#a3a089"/><rect x="0" y="11" width="1" height="1" fill="#8790a4"/><rect x="1" y="11" width="13" height="1" fill="#eef6fd"/><rect x="14" y="11" width="1" height="1" fill="#8790a4"/><rect x="0" y="12" width="1" height="1" fill="#8790a4"/><rect x="1" y="12" width="13" height="1" fill="#eef6fd"/><rect x="14" y="12" width="1" height="1" fill="#8790a4"/><rect x="0" y="13" width="1" height="1" fill="#8790a4"/><rect x="1" y="13" width="13" height="1" fill="#eef6fd"/><rect x="14" y="13" width="1" height="1" fill="#8790a4"/><rect x="0" y="14" width="15" height="1" fill="#6e81a1"/><g shape-rendering="auto"><circle cx="8" cy="6" r="1.5" fill="#5d9ee0" stroke="#0f3f8a" stroke-width="1"/><circle cx="7.7" cy="5.8" r="0.6" fill="#b8def9"/><circle cx="5" cy="11" r="1.5" fill="#5d9ee0" stroke="#0f3f8a" stroke-width="1"/><circle cx="4.7" cy="10.8" r="0.6" fill="#b8def9"/><circle cx="11" cy="11" r="1.5" fill="#5d9ee0" stroke="#0f3f8a" stroke-width="1"/><circle cx="10.7" cy="10.8" r="0.6" fill="#b8def9"/></g></svg>
<div class="txt" style="left:79px;top:385px;transform:scaleX(1.0500)">metadata/1/core_marker_id</div>
<div class="txt" style="left:320.5px;top:385px;transform:scaleX(0.9650)">12</div>
<div class="row" style="top:405px"></div>
<div class="vl" style="left:314px;top:405px"></div>
<svg class="abs" style="left:60px;top:408px" width="15" height="15" shape-rendering="crispEdges"><rect x="0" y="0" width="15" height="1" fill="#2e5c9a"/><rect x="0" y="1" width="1" height="1" fill="#2e5c9a"/><rect x="1" y="1" width="4" height="1" fill="#63a6e4"/><rect x="5" y="1" width="3" height="1" fill="#8cc0ee"/><rect x="8" y="1" width="3" height="1" fill="#b9daf5"/><rect x="11" y="1" width="3" height="1" fill="#e4f1fb"/><rect x="14" y="1" width="1" height="1" fill="#2e5c9a"/><rect x="0" y="2" width="15" height="1" fill="#2e5c9a"/><rect x="0" y="3" width="1" height="1" fill="#b8a978"/><rect x="1" y="3" width="13" height="1" fill="#eef6fd"/><rect x="14" y="3" width="1" height="1" fill="#b8a978"/><rect x="0" y="4" width="1" height="1" fill="#b8a978"/><rect x="1" y="4" width="13" height="1" fill="#eef6fd"/><rect x="14" y="4" width="1" height="1" fill="#b8a978"/><rect x="0" y="5" width="1" height="1" fill="#b8a978"/><rect x="1" y="5" width="13" height="1" fill="#eef6fd"/><rect x="14" y="5" width="1" height="1" fill="#b8a978"/><rect x="0" y="6" width="1" height="1" fill="#b8a978"/><rect x="1" y="6" width="13" height="1" fill="#eef6fd"/><rect x="14" y="6" width="1" height="1" fill="#b8a978"/><rect x="0" y="7" width="1" height="1" fill="#b8a978"/><rect x="1" y="7" width="13" height="1" fill="#eef6fd"/><rect x="14" y="7" width="1" height="1" fill="#b8a978"/><rect x="0" y="8" width="1" height="1" fill="#a3a089"/><rect x="1" y="8" width="13" height="1" fill="#eef6fd"/><rect x="14" y="8" width="1" height="1" fill="#a3a089"/><rect x="0" y="9" width="1" height="1" fill="#a3a089"/><rect x="1" y="9" width="13" height="1" fill="#eef6fd"/><rect x="14" y="9" width="1" height="1" fill="#a3a089"/><rect x="0" y="10" width="1" height="1" fill="#a3a089"/><rect x="1" y="10" width="13" height="1" fill="#eef6fd"/><rect x="14" y="10" width="1" height="1" fill="#a3a089"/><rect x="0" y="11" width="1" height="1" fill="#8790a4"/><rect x="1" y="11" width="13" height="1" fill="#eef6fd"/><rect x="14" y="11" width="1" height="1" fill="#8790a4"/><rect x="0" y="12" width="1" height="1" fill="#8790a4"/><rect x="1" y="12" width="13" height="1" fill="#eef6fd"/><rect x="14" y="12" width="1" height="1" fill="#8790a4"/><rect x="0" y="13" width="1" height="1" fill="#8790a4"/><rect x="1" y="13" width="13" height="1" fill="#eef6fd"/><rect x="14" y="13" width="1" height="1" fill="#8790a4"/><rect x="0" y="14" width="15" height="1" fill="#6e81a1"/><g shape-rendering="auto"><circle cx="8" cy="6" r="1.5" fill="#5d9ee0" stroke="#0f3f8a" stroke-width="1"/><circle cx="7.7" cy="5.8" r="0.6" fill="#b8def9"/><circle cx="5" cy="11" r="1.5" fill="#5d9ee0" stroke="#0f3f8a" stroke-width="1"/><circle cx="4.7" cy="10.8" r="0.6" fill="#b8def9"/><circle cx="11" cy="11" r="1.5" fill="#5d9ee0" stroke="#0f3f8a" stroke-width="1"/><circle cx="10.7" cy="10.8" r="0.6" fill="#b8def9"/></g></svg>
<div class="txt" style="left:79px;top:408px;transform:scaleX(0.9884)">ust/0/ENTER</div>
<div class="txt" style="left:320.5px;top:408px;transform:scaleX(0.9650)">1</div>
<div class="row" style="top:428px"></div>
<div class="bar" style="left:314px;top:428px;width:87px"></div>
<svg class="abs" style="left:60px;top:431px" width="15" height="15" shape-rendering="crispEdges"><rect x="0" y="0" width="15" height="1" fill="#2e5c9a"/><rect x="0" y="1" width="1" height="1" fill="#2e5c9a"/><rect x="1" y="1" width="4" height="1" fill="#63a6e4"/><rect x="5" y="1" width="3" height="1" fill="#8cc0ee"/><rect x="8" y="1" width="3" height="1" fill="#b9daf5"/><rect x="11" y="1" width="3" height="1" fill="#e4f1fb"/><rect x="14" y="1" width="1" height="1" fill="#2e5c9a"/><rect x="0" y="2" width="15" height="1" fill="#2e5c9a"/><rect x="0" y="3" width="1" height="1" fill="#b8a978"/><rect x="1" y="3" width="13" height="1" fill="#eef6fd"/><rect x="14" y="3" width="1" height="1" fill="#b8a978"/><rect x="0" y="4" width="1" height="1" fill="#b8a978"/><rect x="1" y="4" width="13" height="1" fill="#eef6fd"/><rect x="14" y="4" width="1" height="1" fill="#b8a978"/><rect x="0" y="5" width="1" height="1" fill="#b8a978"/><rect x="1" y="5" width="13" height="1" fill="#eef6fd"/><rect x="14" y="5" width="1" height="1" fill="#b8a978"/><rect x="0" y="6" width="1" height="1" fill="#b8a978"/><rect x="1" y="6" width="13" height="1" fill="#eef6fd"/><rect x="14" y="6" width="1" height="1" fill="#b8a978"/><rect x="0" y="7" width="1" height="1" fill="#b8a978"/><rect x="1" y="7" width="13" height="1" fill="#eef6fd"/><rect x="14" y="7" width="1" height="1" fill="#b8a978"/><rect x="0" y="8" width="1" height="1" fill="#a3a089"/><rect x="1" y="8" width="13" height="1" fill="#eef6fd"/><rect x="14" y="8" width="1" height="1" fill="#a3a089"/><rect x="0" y="9" width="1" height="1" fill="#a3a089"/><rect x="1" y="9" width="13" height="1" fill="#eef6fd"/><rect x="14" y="9" width="1" height="1" fill="#a3a089"/><rect x="0" y="10" width="1" height="1" fill="#a3a089"/><rect x="1" y="10" width="13" height="1" fill="#eef6fd"/><rect x="14" y="10" width="1" height="1" fill="#a3a089"/><rect x="0" y="11" width="1" height="1" fill="#8790a4"/><rect x="1" y="11" width="13" height="1" fill="#eef6fd"/><rect x="14" y="11" width="1" height="1" fill="#8790a4"/><rect x="0" y="12" width="1" height="1" fill="#8790a4"/><rect x="1" y="12" width="13" height="1" fill="#eef6fd"/><rect x="14" y="12" width="1" height="1" fill="#8790a4"/><rect x="0" y="13" width="1" height="1" fill="#8790a4"/><rect x="1" y="13" width="13" height="1" fill="#eef6fd"/><rect x="14" y="13" width="1" height="1" fill="#8790a4"/><rect x="0" y="14" width="15" height="1" fill="#6e81a1"/><g shape-rendering="auto"><circle cx="8" cy="6" r="1.5" fill="#5d9ee0" stroke="#0f3f8a" stroke-width="1"/><circle cx="7.7" cy="5.8" r="0.6" fill="#b8def9"/><circle cx="5" cy="11" r="1.5" fill="#5d9ee0" stroke="#0f3f8a" stroke-width="1"/><circle cx="4.7" cy="10.8" r="0.6" fill="#b8def9"/><circle cx="11" cy="11" r="1.5" fill="#5d9ee0" stroke="#0f3f8a" stroke-width="1"/><circle cx="10.7" cy="10.8" r="0.6" fill="#b8def9"/></g></svg>
<div class="txt" style="left:79px;top:431px;transform:scaleX(0.9604)">ust/0/RECEIVE</div>
<div class="txt" style="left:320.5px;top:431px;transform:scaleX(0.9650)">9323</div>
<div class="row" style="top:451px"></div>
<div class="bar" style="left:314px;top:451px;width:87px"></div>
<svg class="abs" style="left:60px;top:454px" width="15" height="15" shape-rendering="crispEdges"><rect x="0" y="0" width="15" height="1" fill="#2e5c9a"/><rect x="0" y="1" width="1" height="1" fill="#2e5c9a"/><rect x="1" y="1" width="4" height="1" fill="#63a6e4"/><rect x="5" y="1" width="3" height="1" fill="#8cc0ee"/><rect x="8" y="1" width="3" height="1" fill="#b9daf5"/><rect x="11" y="1" width="3" height="1" fill="#e4f1fb"/><rect x="14" y="1" width="1" height="1" fill="#2e5c9a"/><rect x="0" y="2" width="15" height="1" fill="#2e5c9a"/><rect x="0" y="3" width="1" height="1" fill="#b8a978"/><rect x="1" y="3" width="13" height="1" fill="#eef6fd"/><rect x="14" y="3" width="1" height="1" fill="#b8a978"/><rect x="0" y="4" width="1" height="1" fill="#b8a978"/><rect x="1" y="4" width="13" height="1" fill="#eef6fd"/><rect x="14" y="4" width="1" height="1" fill="#b8a978"/><rect x="0" y="5" width="1" height="1" fill="#b8a978"/><rect x="1" y="5" width="13" height="1" fill="#eef6fd"/><rect x="14" y="5" width="1" height="1" fill="#b8a978"/><rect x="0" y="6" width="1" height="1" fill="#b8a978"/><rect x="1" y="6" width="13" height="1" fill="#eef6fd"/><rect x="14" y="6" width="1" height="1" fill="#b8a978"/><rect x="0" y="7" width="1" height="1" fill="#b8a978"/><rect x="1" y="7" width="13" height="1" fill="#eef6fd"/><rect x="14" y="7" width="1" height="1" fill="#b8a978"/><rect x="0" y="8" width="1" height="1" fill="#a3a089"/><rect x="1" y="8" width="13" height="1" fill="#eef6fd"/><rect x="14" y="8" width="1" height="1" fill="#a3a089"/><rect x="0" y="9" width="1" height="1" fill="#a3a089"/><rect x="1" y="9" width="13" height="1" fill="#eef6fd"/><rect x="14" y="9" width="1" height="1" fill="#a3a089"/><rect x="0" y="10" width="1" height="1" fill="#a3a089"/><rect x="1" y="10" width="13" height="1" fill="#eef6fd"/><rect x="14" y="10" width="1" height="1" fill="#a3a089"/><rect x="0" y="11" width="1" height="1" fill="#8790a4"/><rect x="1" y="11" width="13" height="1" fill="#eef6fd"/><rect x="14" y="11" width="1" height="1" fill="#8790a4"/><rect x="0" y="12" width="1" height="1" fill="#8790a4"/><rect x="1" y="12" width="13" height="1" fill="#eef6fd"/><rect x="14" y="12" width="1" height="1" fill="#8790a4"/><rect x="0" y="13" width="1" height="1" fill="#8790a4"/><rect x="1" y="13" width="13" height="1" fill="#eef6fd"/><rect x="14" y="13" width="1" height="1" fill="#8790a4"/><rect x="0" y="14" width="15" height="1" fill="#6e81a1"/><g shape-rendering="auto"><circle cx="8" cy="6" r="1.5" fill="#5d9ee0" stroke="#0f3f8a" stroke-width="1"/><circle cx="7.7" cy="5.8" r="0.6" fill="#b8def9"/><circle cx="5" cy="11" r="1.5" fill="#5d9ee0" stroke="#0f3f8a" stroke-width="1"/><circle cx="4.7" cy="10.8" r="0.6" fill="#b8def9"/><circle cx="11" cy="11" r="1.5" fill="#5d9ee0" stroke="#0f3f8a" stroke-width="1"/><circle cx="10.7" cy="10.8" r="0.6" fill="#b8def9"/></g></svg>
<div class="txt" style="left:79px;top:454px;transform:scaleX(1.0130)">ust/0/SEND</div>
<div class="txt" style="left:320.5px;top:454px;transform:scaleX(0.9650)">9323</div>
<div class="row" style="top:474px"></div>
<div class="vl" style="left:314px;top:474px"></div>
<svg class="abs" style="left:60px;top:477px" width="15" height="15" shape-rendering="crispEdges"><rect x="0" y="0" width="15" height="1" fill="#2e5c9a"/><rect x="0" y="1" width="1" height="1" fill="#2e5c9a"/><rect x="1" y="1" width="4" height="1" fill="#63a6e4"/><rect x="5" y="1" width="3" height="1" fill="#8cc0ee"/><rect x="8" y="1" width="3" height="1" fill="#b9daf5"/><rect x="11" y="1" width="3" height="1" fill="#e4f1fb"/><rect x="14" y="1" width="1" height="1" fill="#2e5c9a"/><rect x="0" y="2" width="15" height="1" fill="#2e5c9a"/><rect x="0" y="3" width="1" height="1" fill="#b8a978"/><rect x="1" y="3" width="13" height="1" fill="#eef6fd"/><rect x="14" y="3" width="1" height="1" fill="#b8a978"/><rect x="0" y="4" width="1" height="1" fill="#b8a978"/><rect x="1" y="4" width="13" height="1" fill="#eef6fd"/><rect x="14" y="4" width="1" height="1" fill="#b8a978"/><rect x="0" y="5" width="1" height="1" fill="#b8a978"/><rect x="1" y="5" width="13" height="1" fill="#eef6fd"/><rect x="14" y="5" width="1" height="1" fill="#b8a978"/><rect x="0" y="6" width="1" height="1" fill="#b8a978"/><rect x="1" y="6" width="13" height="1" fill="#eef6fd"/><rect x="14" y="6" width="1" height="1" fill="#b8a978"/><rect x="0" y="7" width="1" height="1" fill="#b8a978"/><rect x="1" y="7" width="13" height="1" fill="#eef6fd"/><rect x="14" y="7" width="1" height="1" fill="#b8a978"/><rect x="0" y="8" width="1" height="1" fill="#a3a089"/><rect x="1" y="8" width="13" height="1" fill="#eef6fd"/><rect x="14" y="8" width="1" height="1" fill="#a3a089"/><rect x="0" y="9" width="1" height="1" fill="#a3a089"/><rect x="1" y="9" width="13" height="1" fill="#eef6fd"/><rect x="14" y="9" width="1" height="1" fill="#a3a089"/><rect x="0" y="10" width="1" height="1" fill="#a3a089"/><rect x="1" y="10" width="13" height="1" fill="#eef6fd"/><rect x="14" y="10" width="1" height="1" fill="#a3a089"/><rect x="0" y="11" width="1" height="1" fill="#8790a4"/><rect x="1" y="11" width="13" height="1" fill="#eef6fd"/><rect x="14" y="11" width="1" height="1" fill="#8790a4"/><rect x="0" y="12" width="1" height="1" fill="#8790a4"/><rect x="1" y="12" width="13" height="1" fill="#eef6fd"/><rect x="14" y="12" width="1" height="1" fill="#8790a4"/><rect x="0" y="13" width="1" height="1" fill="#8790a4"/><rect x="1" y="13" width="13" height="1" fill="#eef6fd"/><rect x="14" y="13" width="1" height="1" fill="#8790a4"/><rect x="0" y="14" width="15" height="1" fill="#6e81a1"/><g shape-rendering="auto"><circle cx="8" cy="6" r="1.5" fill="#5d9ee0" stroke="#0f3f8a" stroke-width="1"/><circle cx="7.7" cy="5.8" r="0.6" fill="#b8def9"/><circle cx="5" cy="11" r="1.5" fill="#5d9ee0" stroke="#0f3f8a" stroke-width="1"/><circle cx="4.7" cy="10.8" r="0.6" fill="#b8def9"/><circle cx="11" cy="11" r="1.5" fill="#5d9ee0" stroke="#0f3f8a" stroke-width="1"/><circle cx="10.7" cy="10.8" r="0.6" fill="#b8def9"/></g></svg>
<div class="txt" style="left:79px;top:477px;transform:scaleX(1.0876)">ust/0/after_fork_child</div>
<div class="txt" style="left:320.5px;top:477px;transform:scaleX(0.9650)">1</div>
<div class="row" style="top:497px"></div>
<div class="bar" style="left:314px;top:497px;width:100px"></div>
<svg class="abs" style="left:60px;top:500px" width="15" height="15" shape-rendering="crispEdges"><rect x="0" y="0" width="15" height="1" fill="#2e5c9a"/><rect x="0" y="1" width="1" height="1" fill="#2e5c9a"/><rect x="1" y="1" width="4" height="1" fill="#63a6e4"/><rect x="5" y="1" width="3" height="1" fill="#8cc0ee"/><rect x="8" y="1" width="3" height="1" fill="#b9daf5"/><rect x="11" y="1" width="3" height="1" fill="#e4f1fb"/><rect x="14" y="1" width="1" height="1" fill="#2e5c9a"/><rect x="0" y="2" width="15" height="1" fill="#2e5c9a"/><rect x="0" y="3" width="1" height="1" fill="#b8a978"/><rect x="1" y="3" width="13" height="1" fill="#eef6fd"/><rect x="14" y="3" width="1" height="1" fill="#b8a978"/><rect x="0" y="4" width="1" height="1" fill="#b8a978"/><rect x="1" y="4" width="13" height="1" fill="#eef6fd"/><rect x="14" y="4" width="1" height="1" fill="#b8a978"/><rect x="0" y="5" width="1" height="1" fill="#b8a978"/><rect x="1" y="5" width="13" height="1" fill="#eef6fd"/><rect x="14" y="5" width="1" height="1" fill="#b8a978"/><rect x="0" y="6" width="1" height="1" fill="#b8a978"/><rect x="1" y="6" width="13" height="1" fill="#eef6fd"/><rect x="14" y="6" width="1" height="1" fill="#b8a978"/><rect x="0" y="7" width="1" height="1" fill="#b8a978"/><rect x="1" y="7" width="13" height="1" fill="#eef6fd"/><rect x="14" y="7" width="1" height="1" fill="#b8a978"/><rect x="0" y="8" width="1" height="1" fill="#a3a089"/><rect x="1" y="8" width="13" height="1" fill="#eef6fd"/><rect x="14" y="8" width="1" height="1" fill="#a3a089"/><rect x="0" y="9" width="1" height="1" fill="#a3a089"/><rect x="1" y="9" width="13" height="1" fill="#eef6fd"/><rect x="14" y="9" width="1" height="1" fill="#a3a089"/><rect x="0" y="10" width="1" height="1" fill="#a3a089"/><rect x="1" y="10" width="13" height="1" fill="#eef6fd"/><rect x="14" y="10" width="1" height="1" fill="#a3a089"/><rect x="0" y="11" width="1" height="1" fill="#8790a4"/><rect x="1" y="11" width="13" height="1" fill="#eef6fd"/><rect x="14" y="11" width="1" height="1" fill="#8790a4"/><rect x="0" y="12" width="1" height="1" fill="#8790a4"/><rect x="1" y="12" width="13" height="1" fill="#eef6fd"/><rect x="14" y="12" width="1" height="1" fill="#8790a4"/><rect x="0" y="13" width="1" height="1" fill="#8790a4"/><rect x="1" y="13" width="13" height="1" fill="#eef6fd"/><rect x="14" y="13" width="1" height="1" fill="#8790a4"/><rect x="0" y="14" width="15" height="1" fill="#6e81a1"/><g shape-rendering="auto"><circle cx="8" cy="6" r="1.5" fill="#5d9ee0" stroke="#0f3f8a" stroke-width="1"/><circle cx="7.7" cy="5.8" r="0.6" fill="#b8def9"/><circle cx="5" cy="11" r="1.5" fill="#5d9ee0" stroke="#0f3f8a" stroke-width="1"/><circle cx="4.7" cy="10.8" r="0.6" fill="#b8def9"/><circle cx="11" cy="11" r="1.5" fill="#5d9ee0" stroke="#0f3f8a" stroke-width="1"/><circle cx="10.7" cy="10.8" r="0.6" fill="#b8def9"/></g></svg>
<div class="txt" style="left:79px;top:500px;transform:scaleX(0.9604)">ust/1/RECEIVE</div>
<div class="txt" style="left:320.5px;top:500px;transform:scaleX(0.9650)">10685</div>
<div class="row" style="top:520px"></div>
<div class="vl" style="left:314px;top:520px"></div>
<svg class="abs" style="left:60px;top:523px" width="15" height="15" shape-rendering="crispEdges"><rect x="0" y="0" width="15" height="1" fill="#2e5c9a"/><rect x="0" y="1" width="1" height="1" fill="#2e5c9a"/><rect x="1" y="1" width="4" height="1" fill="#63a6e4"/><rect x="5" y="1" width="3" height="1" fill="#8cc0ee"/><rect x="8" y="1" width="3" height="1" fill="#b9daf5"/><rect x="11" y="1" width="3" height="1" fill="#e4f1fb"/><rect x="14" y="1" width="1" height="1" fill="#2e5c9a"/><rect x="0" y="2" width="15" height="1" fill="#2e5c9a"/><rect x="0" y="3" width="1" height="1" fill="#b8a978"/><rect x="1" y="3" width="13" height="1" fill="#eef6fd"/><rect x="14" y="3" width="1" height="1" fill="#b8a978"/><rect x="0" y="4" width="1" height="1" fill="#b8a978"/><rect x="1" y="4" width="13" height="1" fill="#eef6fd"/><rect x="14" y="4" width="1" height="1" fill="#b8a978"/><rect x="0" y="5" width="1" height="1" fill="#b8a978"/><rect x="1" y="5" width="13" height="1" fill="#eef6fd"/><rect x="14" y="5" width="1" height="1" fill="#b8a978"/><rect x="0" y="6" width="1" height="1" fill="#b8a978"/><rect x="1" y="6" width="13" height="1" fill="#eef6fd"/><rect x="14" y="6" width="1" height="1" fill="#b8a978"/><rect x="0" y="7" width="1" height="1" fill="#b8a978"/><rect x="1" y="7" width="13" height="1" fill="#eef6fd"/><rect x="14" y="7" width="1" height="1" fill="#b8a978"/><rect x="0" y="8" width="1" height="1" fill="#a3a089"/><rect x="1" y="8" width="13" height="1" fill="#eef6fd"/><rect x="14" y="8" width="1" height="1" fill="#a3a089"/><rect x="0" y="9" width="1" height="1" fill="#a3a089"/><rect x="1" y="9" width="13" height="1" fill="#eef6fd"/><rect x="14" y="9" width="1" height="1" fill="#a3a089"/><rect x="0" y="10" width="1" height="1" fill="#a3a089"/><rect x="1" y="10" width="13" height="1" fill="#eef6fd"/><rect x="14" y="10" width="1" height="1" fill="#a3a089"/><rect x="0" y="11" width="1" height="1" fill="#8790a4"/><rect x="1" y="11" width="13" height="1" fill="#eef6fd"/><rect x="14" y="11" width="1" height="1" fill="#8790a4"/><rect x="0" y="12" width="1" height="1" fill="#8790a4"/><rect x="1" y="12" width="13" height="1" fill="#eef6fd"/><rect x="14" y="12" width="1" height="1" fill="#8790a4"/><rect x="0" y="13" width="1" height="1" fill="#8790a4"/><rect x="1" y="13" width="13" height="1" fill="#eef6fd"/><rect x="14" y="13" width="1" height="1" fill="#8790a4"/><rect x="0" y="14" width="15" height="1" fill="#6e81a1"/><g shape-rendering="auto"><circle cx="8" cy="6" r="1.5" fill="#5d9ee0" stroke="#0f3f8a" stroke-width="1"/><circle cx="7.7" cy="5.8" r="0.6" fill="#b8def9"/><circle cx="5" cy="11" r="1.5" fill="#5d9ee0" stroke="#0f3f8a" stroke-width="1"/><circle cx="4.7" cy="10.8" r="0.6" fill="#b8def9"/><circle cx="11" cy="11" r="1.5" fill="#5d9ee0" stroke="#0f3f8a" stroke-width="1"/><circle cx="10.7" cy="10.8" r="0.6" fill="#b8def9"/></g></svg>
<div class="txt" style="left:79px;top:523px;transform:scaleX(0.9794)">ust/1/RETURN</div>
<div class="txt" style="left:320.5px;top:523px;transform:scaleX(0.9650)">2</div>
<div class="row" style="top:543px"></div>
<div class="bar" style="left:314px;top:543px;width:100px"></div>
<svg class="abs" style="left:60px;top:546px" width="15" height="15" shape-rendering="crispEdges"><rect x="0" y="0" width="15" height="1" fill="#2e5c9a"/><rect x="0" y="1" width="1" height="1" fill="#2e5c9a"/><rect x="1" y="1" width="4" height="1" fill="#63a6e4"/><rect x="5" y="1" width="3" height="1" fill="#8cc0ee"/><rect x="8" y="1" width="3" height="1" fill="#b9daf5"/><rect x="11" y="1" width="3" height="1" fill="#e4f1fb"/><rect x="14" y="1" width="1" height="1" fill="#2e5c9a"/><rect x="0" y="2" width="15" height="1" fill="#2e5c9a"/><rect x="0" y="3" width="1" height="1" fill="#b8a978"/><rect x="1" y="3" width="13" height="1" fill="#eef6fd"/><rect x="14" y="3" width="1" height="1" fill="#b8a978"/><rect x="0" y="4" width="1" height="1" fill="#b8a978"/><rect x="1" y="4" width="13" height="1" fill="#eef6fd"/><rect x="14" y="4" width="1" height="1" fill="#b8a978"/><rect x="0" y="5" width="1" height="1" fill="#b8a978"/><rect x="1" y="5" width="13" height="1" fill="#eef6fd"/><rect x="14" y="5" width="1" height="1" fill="#b8a978"/><rect x="0" y="6" width="1" height="1" fill="#b8a978"/><rect x="1" y="6" width="13" height="1" fill="#eef6fd"/><rect x="14" y="6" width="1" height="1" fill="#b8a978"/><rect x="0" y="7" width="1" height="1" fill="#b8a978"/><rect x="1" y="7" width="13" height="1" fill="#eef6fd"/><rect x="14" y="7" width="1" height="1" fill="#b8a978"/><rect x="0" y="8" width="1" height="1" fill="#a3a089"/><rect x="1" y="8" width="13" height="1" fill="#eef6fd"/><rect x="14" y="8" width="1" height="1" fill="#a3a089"/><rect x="0" y="9" width="1" height="1" fill="#a3a089"/><rect x="1" y="9" width="13" height="1" fill="#eef6fd"/><rect x="14" y="9" width="1" height="1" fill="#a3a089"/><rect x="0" y="10" width="1" height="1" fill="#a3a089"/><rect x="1" y="10" width="13" height="1" fill="#eef6fd"/><rect x="14" y="10" width="1" height="1" fill="#a3a089"/><rect x="0" y="11" width="1" height="1" fill="#8790a4"/><rect x="1" y="11" width="13" height="1" fill="#eef6fd"/><rect x="14" y="11" width="1" height="1" fill="#8790a4"/><rect x="0" y="12" width="1" height="1" fill="#8790a4"/><rect x="1" y="12" width="13" height="1" fill="#eef6fd"/><rect x="14" y="12" width="1" height="1" fill="#8790a4"/><rect x="0" y="13" width="1" height="1" fill="#8790a4"/><rect x="1" y="13" width="13" height="1" fill="#eef6fd"/><rect x="14" y="13" width="1" height="1" fill="#8790a4"/><rect x="0" y="14" width="15" height="1" fill="#6e81a1"/><g shape-rendering="auto"><circle cx="8" cy="6" r="1.5" fill="#5d9ee0" stroke="#0f3f8a" stroke-width="1"/><circle cx="7.7" cy="5.8" r="0.6" fill="#b8def9"/><circle cx="5" cy="11" r="1.5" fill="#5d9ee0" stroke="#0f3f8a" stroke-width="1"/><circle cx="4.7" cy="10.8" r="0.6" fill="#b8def9"/><circle cx="11" cy="11" r="1.5" fill="#5d9ee0" stroke="#0f3f8a" stroke-width="1"/><circle cx="10.7" cy="10.8" r="0.6" fill="#b8def9"/></g></svg>
<div class="txt" style="left:79px;top:546px;transform:scaleX(1.0130)">ust/1/SEND</div>
<div class="txt" style="left:320.5px;top:546px;transform:scaleX(0.9650)">10685</div>
</body></html>
